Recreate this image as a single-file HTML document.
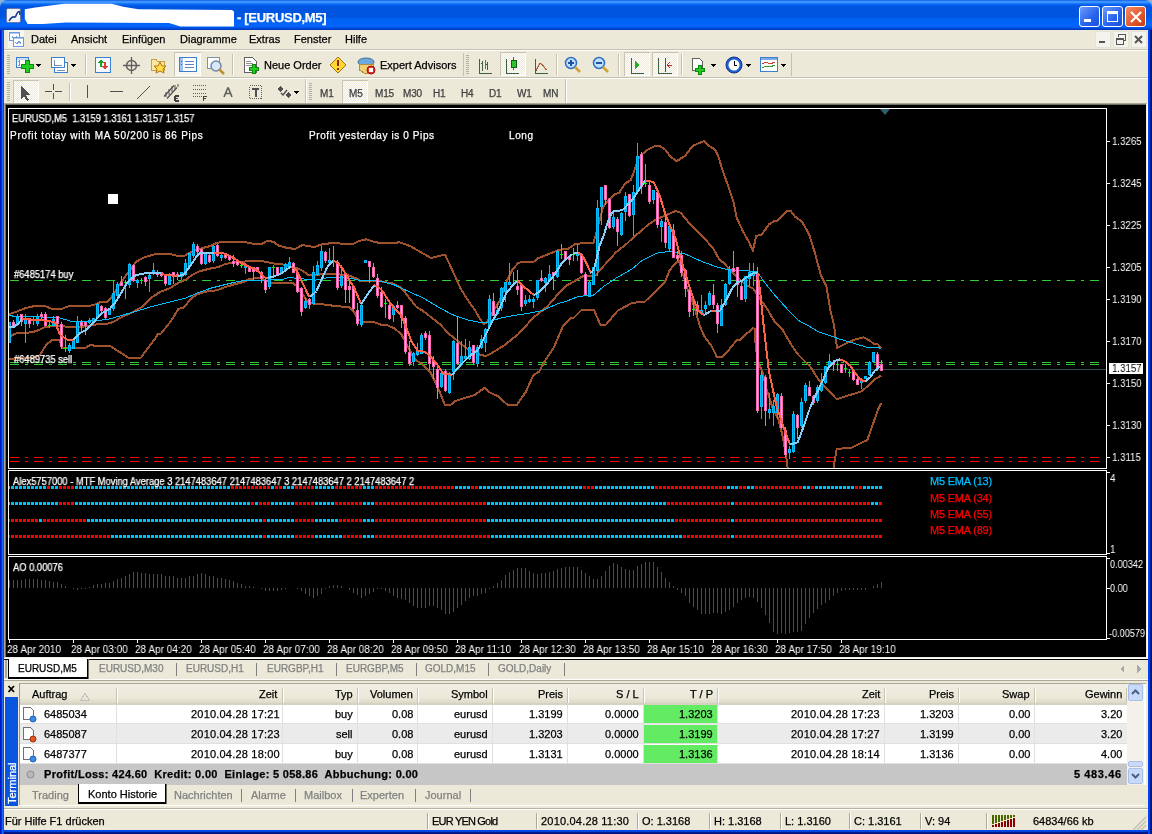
<!DOCTYPE html>
<html><head><meta charset="utf-8">
<style>
*{margin:0;padding:0;box-sizing:border-box}
html,body{width:1152px;height:834px;overflow:hidden;background:#8FB0D0;-webkit-font-smoothing:antialiased;font-family:"Liberation Sans",sans-serif;font-size:11px;color:#000;position:relative}
.a{position:absolute}
.t,.pl,.tl{will-change:transform;-webkit-text-stroke:0.25px currentColor}
.pl,.tl{-webkit-text-stroke:0}
.t{position:absolute;white-space:nowrap;line-height:1}
#title{left:0;top:0;width:1152px;height:30px;background:linear-gradient(#0046D5 0px,#3A93FF 1px,#3A93FF 2.5px,#0A6CF8 4px,#0056E2 6px,#0055DE 17px,#0061F2 19px,#0066FF 26px,#004FE0 28px,#0036B8 30px);border-radius:7px 7px 0 0}
.tbtn{width:21px;height:21px;border:1px solid #fff;border-radius:3px}
.menu .t{top:34px;font-size:11px}
.w{color:#fff}
.pl{position:absolute;left:1112px;color:#fff;font-size:11px;line-height:1;white-space:nowrap;transform:scaleX(0.88);transform-origin:0 0}
.ct{font-size:10px;transform:scaleX(0.935);transform-origin:0 0}
.tl{position:absolute;top:644px;color:#fff;font-size:11px;line-height:1;white-space:nowrap;transform:scaleX(0.91);transform-origin:0 0}
</style></head><body>
<div class="a" style="left:0;top:20px;width:1152px;height:814px;background:#ECE9D8"></div>
<!-- title bar -->
<div id="title" class="a"></div>
<div class="a" style="left:6px;top:8px;width:15px;height:15px;background:#F4F4F4;border:1px solid #6A7AA8;border-radius:2px"></div>
<svg class="a" style="left:0;top:0" width="240" height="30"><path d="M24.8 9.2L35.3 7.6 48.6 5.7 64 3.8H111.7L123.1 6.7 138.4 9.2 232 9.9 234 11.5V26.4H180.4L169 22.9 65.8 22.5 43 23.9H27.6L24.8 19Z" fill="#fff"/></svg>
<div class="t" style="left:237px;top:11px;font-size:13px;letter-spacing:-0.3px;font-weight:bold;color:#fff">- [EURUSD,M5]</div>
<div class="a tbtn" style="left:1079px;top:6px;background:linear-gradient(135deg,#6E9BFA,#2562EC 60%,#1D50D8)"></div>
<div class="a" style="left:1084px;top:19px;width:7px;height:3px;background:#fff"></div>
<div class="a tbtn" style="left:1102px;top:6px;background:linear-gradient(135deg,#6E9BFA,#2562EC 60%,#1D50D8)"></div>
<div class="a" style="left:1107px;top:11px;width:11px;height:11px;border:1px solid #fff;border-top-width:3px"></div>
<div class="a tbtn" style="left:1125px;top:6px;background:linear-gradient(135deg,#F58A6A,#E2562B 60%,#C33C10)"></div>

<svg class="a" style="left:1125px;top:6px" width="22" height="22"><path d="M6 6l10 10M16 6L6 16" stroke="#fff" stroke-width="2.2"/></svg>
<svg class="a" style="left:6px;top:8px" width="16" height="16"><path d="M3 13c2-3 3-5 5-4s2-3 4-5 2 2 2 3" stroke="#1A3A90" stroke-width="1.6" fill="none"/></svg>
<!-- MDI buttons -->
<div class="a" style="left:1095px;top:31px;width:16px;height:17px;background:#F4F3EE;border:1px solid #E6E3D6"></div>
<div class="a" style="left:1113px;top:31px;width:16px;height:17px;background:#F4F3EE;border:1px solid #E6E3D6"></div>
<div class="a" style="left:1131px;top:31px;width:16px;height:17px;background:#F4F3EE;border:1px solid #E6E3D6"></div>
<svg class="a" style="left:1095px;top:31px" width="54" height="18" shape-rendering="crispEdges">
<rect x="4" y="10" width="6" height="2" fill="#555"/>
<rect x="21.5" y="7.5" width="7" height="6" fill="none" stroke="#555"/><rect x="21" y="7" width="8" height="2" fill="#555"/>
<path d="M23.5 5.5V3.5h7v6h-2" fill="none" stroke="#555"/>
<path d="M40 5l7 7M47 5l-7 7" stroke="#555" stroke-width="2" shape-rendering="auto"/>
</svg>
<div class="a" style="left:0;top:30px;width:4px;height:804px;background:linear-gradient(90deg,#0019C6 25%,#0630D0 25% 50%,#1E6AF0 50% 75%,#0052E3 75%)"></div>
<div class="a" style="left:1148px;top:30px;width:4px;height:804px;background:linear-gradient(90deg,#0046F0 25%,#0044D8 25% 50%,#001C90 50% 75%,#00117E 75%)"></div>
<div class="a" style="left:4px;top:830px;width:1144px;height:4px;background:linear-gradient(#0046F0 25%,#0044D8 25% 50%,#001C90 50% 75%,#00117E 75%)"></div>

<!-- menu -->
<div class="a" style="left:4px;top:49px;width:1144px;height:1px;background:#C5C2B2"></div>
<div class="a" style="left:4px;top:50px;width:1144px;height:1px;background:#fff"></div>
<div class="menu">
<div class="t" style="left:31px">Datei</div>
<div class="t" style="left:71px">Ansicht</div>
<div class="t" style="left:122px">Einfügen</div>
<div class="t" style="left:180px">Diagramme</div>
<div class="t" style="left:249px">Extras</div>
<div class="t" style="left:294px">Fenster</div>
<div class="t" style="left:345px">Hilfe</div>
</div>

<!-- toolbars -->
<div class="a" style="left:4px;top:77px;width:1144px;height:1px;background:#C5C2B2"></div>
<div class="a" style="left:4px;top:78px;width:1144px;height:1px;background:#fff"></div>


<!-- menu icon -->
<div class="a" style="left:8px;top:30px;width:16px;height:18px;background:#F6F5F0"></div>
<svg class="a" style="left:8px;top:31px" width="16" height="16" shape-rendering="crispEdges">
<rect x="1.5" y="1.5" width="10" height="8" fill="#fff" stroke="#6A9BE8"/>
<rect x="2" y="2" width="9" height="1" fill="#A8C8F0"/>
<path d="M4 6h5M4 6l1-1M4 6l1 1M9 6l-1-1M9 6l-1 1" stroke="#6A9BE8" fill="none"/>
<rect x="5.5" y="6.5" width="10" height="9" fill="#fff" stroke="#6A9BE8"/>
<rect x="6" y="7" width="9" height="1" fill="#A8C8F0"/>
<path d="M7 11l2 2 2-3 2 3" stroke="#6A9BE8" fill="none"/>
</svg>
<!-- toolbar row1 -->
<div class="a" style="left:7px;top:55px;width:3px;height:19px;background:repeating-linear-gradient(#B5B19F 0 1px,transparent 1px 2px)"></div>
<svg class="a" style="left:0;top:51px" width="800" height="27" shape-rendering="crispEdges">
 <!-- new chart -->
 <rect x="16.5" y="6.5" width="12" height="10" fill="#fff" stroke="#3C7FD0"/>
 <rect x="17" y="7" width="11" height="2" fill="#C8DCF4"/>
 <path d="M19 9v6M18 10h2M18 14h2" stroke="#7890B0" fill="none"/>
 <path d="M25 9h4v4h4v4h-4v4h-4v-4h-4v-4h4z" fill="#22CC22" stroke="#0A8A0A"/>
 <path d="M36 13h5l-2.5 3z" fill="#000"/>
 <!-- profiles -->
 <rect x="54.5" y="11.5" width="13" height="10" fill="#fff" stroke="#3C7FD0"/>
 <rect x="51.5" y="6.5" width="13" height="10" fill="#fff" stroke="#3C7FD0"/>
 <path d="M54 9v5h8M57 19h8" stroke="#7890B0" fill="none"/>
 <path d="M71 13h5l-2.5 3z" fill="#000"/>
 <rect x="85" y="3" width="1" height="21" fill="#C5C2B2"/><rect x="86" y="3" width="1" height="21" fill="#fff"/>
 <!-- market watch -->
 <rect x="95.5" y="6.5" width="15" height="15" fill="#F4F8FF" stroke="#3C7FD0"/>
 <path d="M101 8l-3 4h2v4h2v-4h2z" fill="#20A020"/>
 <path d="M105 19l3-4h-2v-4h-2v4h-2z" fill="#E04030"/>
 <!-- crosshair -->
 <circle cx="131.5" cy="14.5" r="5" fill="none" stroke="#606060" stroke-width="1.5" shape-rendering="auto"/>
 <path d="M131.5 6v17M123 14.5h17" stroke="#606060" stroke-width="1.3" shape-rendering="auto"/>
 <!-- folder star -->
 <path d="M151 8h5l1 2h7v9h-13z" fill="#F8E8A0" stroke="#C8A040"/>
 <path d="M160 11l2 4h4l-3 3 1 4-4-2-4 2 1-4-3-3h4z" fill="#FFE040" stroke="#B07020" shape-rendering="auto"/>
 <!-- pressed data window -->
 <rect x="174.5" y="1.5" width="26" height="23" fill="#F7F6F1" stroke="#ffffff"/>
 <path d="M174.5 24.5V1.5h26" stroke="#C9C5B5" fill="none"/>
 <rect x="179.5" y="6.5" width="17" height="14" fill="#fff" stroke="#3C7FD0"/>
 <rect x="180" y="7" width="3" height="13" fill="#9CC0F0"/>
 <path d="M185 10h9M185 13h9M185 16h9" stroke="#6080C0"/>
 <path d="M181 10h1M181 13h1" stroke="#E03030"/>
 <!-- tester -->
 <rect x="207.5" y="6.5" width="12" height="11" fill="#fff" stroke="#8090A0"/>
 <circle cx="216" cy="15" r="5" fill="#D8E8F8" stroke="#7088A8" stroke-width="1.5" shape-rendering="auto"/>
 <path d="M219 18l5 5" stroke="#C09030" stroke-width="2.5" shape-rendering="auto"/>
 <rect x="232" y="3" width="1" height="21" fill="#C5C2B2"/><rect x="233" y="3" width="1" height="21" fill="#fff"/>
 <!-- new order -->
 <path d="M244.5 6.5h8l4 4v11h-12z" fill="#fff" stroke="#606060"/>
 <path d="M246 10h5M246 12h7M246 14h7" stroke="#909090"/>
 <path d="M252 13h3v3h3v3h-3v3h-3v-3h-3v-3h3z" fill="#22CC22" stroke="#0A8A0A"/>
 <!-- warning -->
 <path d="M338 6l8 8-8 8-8-8z" fill="#FFD830" stroke="#A07010"/>
 <rect x="337" y="9" width="2" height="6" fill="#A02010"/><rect x="337" y="17" width="2" height="2" fill="#A02010"/>
 <!-- experts -->
 <ellipse cx="366" cy="11" rx="8" ry="4" fill="#6FA8DC" stroke="#40709C" shape-rendering="auto"/>
 <path d="M359 13h14v6l-7 4-7-4z" fill="#F0D070" stroke="#B09040"/>
 <circle cx="371" cy="19" r="4" fill="#E03020" stroke="#A01010" shape-rendering="auto"/>
 <rect x="369" y="17" width="4" height="4" fill="#fff"/>
 <!-- toolbar end 1 -->
 <rect x="463" y="2" width="1" height="23" fill="#C5C2B2"/>
 <rect x="466" y="4" width="3" height="20" fill="url(#grip)"/>
 <!-- bar chart -->
 <path d="M479 8v14h13M482 20V10M481 12h1M482 18h1M487 19V11M486 13h1M487 16h1" stroke="#406040" fill="none"/>
 <path d="M485 9v9" stroke="#20A020"/>
 <!-- candle pressed -->
 <rect x="500.5" y="1.5" width="25" height="23" fill="url(#dither)" stroke="#fff"/>
 <path d="M500.5 24.5V1.5h25" stroke="#C9C5B5" fill="none"/>
 <path d="M506 8v14h13" stroke="#406040" fill="none"/>
 <path d="M513 6v13" stroke="#208020"/><rect x="511" y="9" width="5" height="7" fill="#30C030" stroke="#106010"/>
 <!-- line chart -->
 <path d="M535 8v14h13M536 20l4-8 3 3 4 4" stroke="#406040" fill="none"/>
 <path d="M536 19l4-7 3 2 3 5" stroke="#D05030" fill="none" shape-rendering="auto"/>
 <rect x="556" y="3" width="1" height="21" fill="#C5C2B2"/><rect x="557" y="3" width="1" height="21" fill="#fff"/>
 <!-- zoom in/out -->
 <circle cx="571" cy="12" r="5.5" fill="#BFE0FF" stroke="#3070C0" stroke-width="1.5" shape-rendering="auto"/>
 <path d="M568 12h6M571 9v6" stroke="#2050A0" stroke-width="1.5"/>
 <path d="M575 16l5 5" stroke="#D0A030" stroke-width="2.5" shape-rendering="auto"/>
 <circle cx="599" cy="12" r="5.5" fill="#BFE0FF" stroke="#3070C0" stroke-width="1.5" shape-rendering="auto"/>
 <path d="M596 12h6" stroke="#2050A0" stroke-width="1.5"/>
 <path d="M603 16l5 5" stroke="#D0A030" stroke-width="2.5" shape-rendering="auto"/>
 <rect x="618" y="3" width="1" height="21" fill="#C5C2B2"/><rect x="619" y="3" width="1" height="21" fill="#fff"/>
 <!-- autoscroll pressed -->
 <rect x="624.5" y="1.5" width="25" height="23" fill="url(#dither)" stroke="#fff"/>
 <path d="M624.5 24.5V1.5h25" stroke="#C9C5B5" fill="none"/>
 <path d="M631 7v15h13" stroke="#406040" fill="none"/>
 <path d="M635 10l5 4-5 4z" fill="#20B020"/>
 <rect x="652.5" y="1.5" width="25" height="23" fill="url(#dither)" stroke="#fff"/>
 <path d="M652.5 24.5V1.5h25" stroke="#C9C5B5" fill="none"/>
 <path d="M658 7v15h14M665 7v14" stroke="#406040" fill="none"/>
 <path d="M667 14h5M667 14l3-3M667 14l3 3" stroke="#C03020" fill="none"/>
 <rect x="681" y="3" width="1" height="21" fill="#C5C2B2"/><rect x="682" y="3" width="1" height="21" fill="#fff"/>
 <!-- templates -->
 <path d="M692.5 7.5h7l3 3v9h-10z" fill="#fff" stroke="#606060"/>
 <path d="M698 14h3v3h3v3h-3v3h-3v-3h-3v-3h3z" fill="#22CC22" stroke="#0A8A0A"/>
 <path d="M711 13h5l-2.5 3z" fill="#000"/>
 <!-- clock -->
 <circle cx="734" cy="14" r="8" fill="#2060D0" stroke="#103090" shape-rendering="auto"/>
 <circle cx="734" cy="14" r="5.5" fill="#fff" shape-rendering="auto"/>
 <path d="M734 10v4h3" stroke="#000" fill="none"/>
 <path d="M746 13h5l-2.5 3z" fill="#000"/>
 <!-- indicators -->
 <rect x="760.5" y="6.5" width="17" height="14" fill="#fff" stroke="#3C7FD0"/>
 <rect x="761" y="7" width="16" height="2" fill="#7AA8E8"/>
 <path d="M762 13l4-2 4 2 5-2" stroke="#D04030" fill="none"/>
 <path d="M762 17l4-2 4 1 5-2" stroke="#30A030" fill="none"/>
 <path d="M781 13h5l-2.5 3z" fill="#000"/>
 <rect x="791" y="2" width="1" height="23" fill="#C5C2B2"/>
 <defs><pattern id="dither" width="2" height="2" patternUnits="userSpaceOnUse"><rect width="2" height="2" fill="#FFFFFF"/><rect width="1" height="1" fill="#ECE9D8"/><rect x="1" y="1" width="1" height="1" fill="#ECE9D8"/></pattern><pattern id="grip" width="3" height="2" patternUnits="userSpaceOnUse"><rect width="3" height="1" fill="#B5B19F"/></pattern></defs>
</svg>
<div class="t" style="left:264px;top:60px">Neue Order</div>
<div class="t" style="left:380px;top:60px">Expert Advisors</div>

<!-- toolbar row2 -->
<div class="a" style="left:7px;top:82px;width:3px;height:19px;background:repeating-linear-gradient(#B5B19F 0 1px,transparent 1px 2px)"></div>
<svg class="a" style="left:0;top:79px" width="600" height="25" shape-rendering="crispEdges">
 <rect x="13.5" y="1.5" width="25" height="22" fill="url(#dither)" stroke="#fff"/>
 <path d="M13.5 23.5V1.5h25" stroke="#C9C5B5" fill="none"/>
 <path d="M21 6v14l3-3 3 5 2-1-3-5h4z" fill="#505050"/>
 <path d="M53.5 5v15M45 12.5h17" stroke="#505050"/>
 <rect x="52" y="11" width="3" height="3" fill="#ECE9D8"/>
 <rect x="69" y="4" width="1" height="18" fill="#C5C2B2"/><rect x="70" y="4" width="1" height="18" fill="#fff"/>
 <rect x="87" y="6" width="1" height="13" fill="#505050"/>
 <rect x="110" y="12" width="13" height="1" fill="#505050"/>
 <path d="M137 20l13-13" stroke="#505050" shape-rendering="auto"/>
  <g shape-rendering="auto" stroke="#505050" fill="none">
 <path d="M164 17.5l10-11M167 19.5l10-11" stroke-width="1.2"/>
 <path d="M166 13v5M169 10v6M172 7v6M175 6v5M178 5v3" stroke-width="1"/>
 </g>
 <path d="M175 17h4M175 17v5M175 19.5h3M175 22h4" stroke="#404040" stroke-width="1.3" fill="none"/>
 <path d="M193 6.5h13M193 10.5h13M193 14h13M193 17.5h10" stroke="#606060" stroke-dasharray="1 1" fill="none"/>
 <path d="M203.5 17v5M203 17.5h4M203 19.5h3" stroke="#404040" stroke-width="1.3" fill="none"/>
 <path d="M224 18l3.8-9h0.6L232 18M225.5 14.5h5" stroke="#606060" stroke-width="1.6" fill="none" shape-rendering="auto"/>
 <rect x="249.5" y="6.5" width="12" height="13" fill="none" stroke="#606060" stroke-dasharray="1 1"/>
 <path d="M252 9.5h7M255.5 9.5v8" stroke="#505050" stroke-width="2" fill="none"/>
 <path d="M280 7l3 3-3 3-3-3z" fill="#505050"/><path d="M288 13l3 3-3 3-3-3z" fill="#505050"/>
 <path d="M281 14l2 2 4-5" stroke="#505050" stroke-width="1.5" fill="none" shape-rendering="auto"/>
 <path d="M294 12h5l-2.5 3z" fill="#000"/>
<rect x="305" y="0" width="1" height="25" fill="#C5C2B2"/><rect x="306" y="0" width="1" height="25" fill="#fff"/>
 <rect x="309" y="4" width="3" height="18" fill="url(#grip2)"/>
 <rect x="342.5" y="1.5" width="25" height="22" fill="url(#dither)" stroke="#fff"/>
 <path d="M342.5 23.5V1.5h25" stroke="#C9C5B5" fill="none"/>
 <rect x="565" y="0" width="1" height="25" fill="#C5C2B2"/><rect x="566" y="0" width="1" height="25" fill="#fff"/>
 <defs><pattern id="dither2" width="2" height="2" patternUnits="userSpaceOnUse"><rect width="2" height="2" fill="#FFFFFF"/><rect width="1" height="1" fill="#ECE9D8"/><rect x="1" y="1" width="1" height="1" fill="#ECE9D8"/></pattern><pattern id="grip2" width="3" height="2" patternUnits="userSpaceOnUse"><rect width="3" height="1" fill="#B5B19F"/></pattern></defs>
</svg>
<div class="t" style="left:320px;top:89px;color:#404040;font-size:10px;letter-spacing:-0.2px">M1</div>
<div class="t" style="left:349px;top:89px;color:#404040;font-size:10px;letter-spacing:-0.2px">M5</div>
<div class="t" style="left:375px;top:89px;color:#404040;font-size:10px;letter-spacing:-0.2px">M15</div>
<div class="t" style="left:403px;top:89px;color:#404040;font-size:10px;letter-spacing:-0.2px">M30</div>
<div class="t" style="left:433px;top:89px;color:#404040;font-size:10px;letter-spacing:-0.2px">H1</div>
<div class="t" style="left:461px;top:89px;color:#404040;font-size:10px;letter-spacing:-0.2px">H4</div>
<div class="t" style="left:489px;top:89px;color:#404040;font-size:10px;letter-spacing:-0.2px">D1</div>
<div class="t" style="left:517px;top:89px;color:#404040;font-size:10px;letter-spacing:-0.2px">W1</div>
<div class="t" style="left:543px;top:89px;color:#404040;font-size:10px;letter-spacing:-0.2px">MN</div>

<!-- chart window -->
<div class="a" style="left:4px;top:103px;width:1144px;height:1px;background:#ACA899"></div>
<div class="a" style="left:4px;top:104px;width:1143px;height:1px;background:#716F64"></div>
<div class="a" style="left:4px;top:103px;width:1px;height:556px;background:#ACA899"></div>
<div class="a" style="left:5px;top:104px;width:1px;height:554px;background:#716F64"></div>
<div class="a" style="left:6px;top:105px;width:1140px;height:552px;background:#000"></div>
<div class="a" style="left:1146px;top:104px;width:1px;height:554px;background:#F1EFE2"></div>
<div class="a" style="left:1147px;top:103px;width:1px;height:556px;background:#fff"></div>
<div class="a" style="left:5px;top:657px;width:1142px;height:1px;background:#F1EFE2"></div>
<div class="a" style="left:4px;top:658px;width:1144px;height:1px;background:#fff"></div>
<!-- frames -->
<div class="a" style="left:8px;top:108px;width:1099px;height:361px;border:1px solid #fff"></div>
<div class="a" style="left:8px;top:470px;width:1099px;height:85px;border:1px solid #fff"></div>
<div class="a" style="left:8px;top:556px;width:1099px;height:84px;border:1px solid #fff"></div>
<svg class="a" style="left:0;top:0" width="1152" height="834" shape-rendering="crispEdges"><defs><clipPath id="cm"><rect x="9" y="109" width="1097" height="359"/></clipPath><clipPath id="ci"><rect x="9" y="471" width="1097" height="83"/></clipPath><clipPath id="ca"><rect x="9" y="557" width="1097" height="82"/></clipPath></defs><g clip-path="url(#cm)"><rect x="9" y="369" width="1097" height="1" fill="#2F4F4F"/><path d="M10 280.5H19M25 280.5H28M34 280.5H43M49 280.5H52M58 280.5H67M73 280.5H76M82 280.5H91M97 280.5H100M106 280.5H115M121 280.5H124M130 280.5H139M145 280.5H148M154 280.5H163M169 280.5H172M178 280.5H187M193 280.5H196M202 280.5H211M217 280.5H220M226 280.5H235M241 280.5H244M250 280.5H259M265 280.5H268M274 280.5H283M289 280.5H292M298 280.5H307M313 280.5H316M322 280.5H331M337 280.5H340M346 280.5H355M361 280.5H364M370 280.5H379M385 280.5H388M394 280.5H403M409 280.5H412M418 280.5H427M433 280.5H436M442 280.5H451M457 280.5H460M466 280.5H475M481 280.5H484M490 280.5H499M505 280.5H508M514 280.5H523M529 280.5H532M538 280.5H547M553 280.5H556M562 280.5H571M577 280.5H580M586 280.5H595M601 280.5H604M610 280.5H619M625 280.5H628M634 280.5H643M649 280.5H652M658 280.5H667M673 280.5H676M682 280.5H691M697 280.5H700M706 280.5H715M721 280.5H724M730 280.5H739M745 280.5H748M754 280.5H763M769 280.5H772M778 280.5H787M793 280.5H796M802 280.5H811M817 280.5H820M826 280.5H835M841 280.5H844M850 280.5H859M865 280.5H868M874 280.5H883M889 280.5H892M898 280.5H907M913 280.5H916M922 280.5H931M937 280.5H940M946 280.5H955M961 280.5H964M970 280.5H979M985 280.5H988M994 280.5H1003M1009 280.5H1012M1018 280.5H1027M1033 280.5H1036M1042 280.5H1051M1057 280.5H1060M1066 280.5H1075M1081 280.5H1084M1090 280.5H1099" stroke="#32CD32" stroke-width="1" fill="none"/><path d="M10 362.5H19M25 362.5H28M34 362.5H43M49 362.5H52M58 362.5H67M73 362.5H76M82 362.5H91M97 362.5H100M106 362.5H115M121 362.5H124M130 362.5H139M145 362.5H148M154 362.5H163M169 362.5H172M178 362.5H187M193 362.5H196M202 362.5H211M217 362.5H220M226 362.5H235M241 362.5H244M250 362.5H259M265 362.5H268M274 362.5H283M289 362.5H292M298 362.5H307M313 362.5H316M322 362.5H331M337 362.5H340M346 362.5H355M361 362.5H364M370 362.5H379M385 362.5H388M394 362.5H403M409 362.5H412M418 362.5H427M433 362.5H436M442 362.5H451M457 362.5H460M466 362.5H475M481 362.5H484M490 362.5H499M505 362.5H508M514 362.5H523M529 362.5H532M538 362.5H547M553 362.5H556M562 362.5H571M577 362.5H580M586 362.5H595M601 362.5H604M610 362.5H619M625 362.5H628M634 362.5H643M649 362.5H652M658 362.5H667M673 362.5H676M682 362.5H691M697 362.5H700M706 362.5H715M721 362.5H724M730 362.5H739M745 362.5H748M754 362.5H763M769 362.5H772M778 362.5H787M793 362.5H796M802 362.5H811M817 362.5H820M826 362.5H835M841 362.5H844M850 362.5H859M865 362.5H868M874 362.5H883M889 362.5H892M898 362.5H907M913 362.5H916M922 362.5H931M937 362.5H940M946 362.5H955M961 362.5H964M970 362.5H979M985 362.5H988M994 362.5H1003M1009 362.5H1012M1018 362.5H1027M1033 362.5H1036M1042 362.5H1051M1057 362.5H1060M1066 362.5H1075M1081 362.5H1084M1090 362.5H1099" stroke="#32CD32" stroke-width="1" fill="none"/><path d="M10 364.5H19M25 364.5H28M34 364.5H43M49 364.5H52M58 364.5H67M73 364.5H76M82 364.5H91M97 364.5H100M106 364.5H115M121 364.5H124M130 364.5H139M145 364.5H148M154 364.5H163M169 364.5H172M178 364.5H187M193 364.5H196M202 364.5H211M217 364.5H220M226 364.5H235M241 364.5H244M250 364.5H259M265 364.5H268M274 364.5H283M289 364.5H292M298 364.5H307M313 364.5H316M322 364.5H331M337 364.5H340M346 364.5H355M361 364.5H364M370 364.5H379M385 364.5H388M394 364.5H403M409 364.5H412M418 364.5H427M433 364.5H436M442 364.5H451M457 364.5H460M466 364.5H475M481 364.5H484M490 364.5H499M505 364.5H508M514 364.5H523M529 364.5H532M538 364.5H547M553 364.5H556M562 364.5H571M577 364.5H580M586 364.5H595M601 364.5H604M610 364.5H619M625 364.5H628M634 364.5H643M649 364.5H652M658 364.5H667M673 364.5H676M682 364.5H691M697 364.5H700M706 364.5H715M721 364.5H724M730 364.5H739M745 364.5H748M754 364.5H763M769 364.5H772M778 364.5H787M793 364.5H796M802 364.5H811M817 364.5H820M826 364.5H835M841 364.5H844M850 364.5H859M865 364.5H868M874 364.5H883M889 364.5H892M898 364.5H907M913 364.5H916M922 364.5H931M937 364.5H940M946 364.5H955M961 364.5H964M970 364.5H979M985 364.5H988M994 364.5H1003M1009 364.5H1012M1018 364.5H1027M1033 364.5H1036M1042 364.5H1051M1057 364.5H1060M1066 364.5H1075M1081 364.5H1084M1090 364.5H1099" stroke="#32CD32" stroke-width="1" fill="none"/><path d="M10 457.5H19M25 457.5H28M34 457.5H43M49 457.5H52M58 457.5H67M73 457.5H76M82 457.5H91M97 457.5H100M106 457.5H115M121 457.5H124M130 457.5H139M145 457.5H148M154 457.5H163M169 457.5H172M178 457.5H187M193 457.5H196M202 457.5H211M217 457.5H220M226 457.5H235M241 457.5H244M250 457.5H259M265 457.5H268M274 457.5H283M289 457.5H292M298 457.5H307M313 457.5H316M322 457.5H331M337 457.5H340M346 457.5H355M361 457.5H364M370 457.5H379M385 457.5H388M394 457.5H403M409 457.5H412M418 457.5H427M433 457.5H436M442 457.5H451M457 457.5H460M466 457.5H475M481 457.5H484M490 457.5H499M505 457.5H508M514 457.5H523M529 457.5H532M538 457.5H547M553 457.5H556M562 457.5H571M577 457.5H580M586 457.5H595M601 457.5H604M610 457.5H619M625 457.5H628M634 457.5H643M649 457.5H652M658 457.5H667M673 457.5H676M682 457.5H691M697 457.5H700M706 457.5H715M721 457.5H724M730 457.5H739M745 457.5H748M754 457.5H763M769 457.5H772M778 457.5H787M793 457.5H796M802 457.5H811M817 457.5H820M826 457.5H835M841 457.5H844M850 457.5H859M865 457.5H868M874 457.5H883M889 457.5H892M898 457.5H907M913 457.5H916M922 457.5H931M937 457.5H940M946 457.5H955M961 457.5H964M970 457.5H979M985 457.5H988M994 457.5H1003M1009 457.5H1012M1018 457.5H1027M1033 457.5H1036M1042 457.5H1051M1057 457.5H1060M1066 457.5H1075M1081 457.5H1084M1090 457.5H1099" stroke="#FF0000" stroke-width="1" fill="none"/><path d="M10 461.5H19M25 461.5H28M34 461.5H43M49 461.5H52M58 461.5H67M73 461.5H76M82 461.5H91M97 461.5H100M106 461.5H115M121 461.5H124M130 461.5H139M145 461.5H148M154 461.5H163M169 461.5H172M178 461.5H187M193 461.5H196M202 461.5H211M217 461.5H220M226 461.5H235M241 461.5H244M250 461.5H259M265 461.5H268M274 461.5H283M289 461.5H292M298 461.5H307M313 461.5H316M322 461.5H331M337 461.5H340M346 461.5H355M361 461.5H364M370 461.5H379M385 461.5H388M394 461.5H403M409 461.5H412M418 461.5H427M433 461.5H436M442 461.5H451M457 461.5H460M466 461.5H475M481 461.5H484M490 461.5H499M505 461.5H508M514 461.5H523M529 461.5H532M538 461.5H547M553 461.5H556M562 461.5H571M577 461.5H580M586 461.5H595M601 461.5H604M610 461.5H619M625 461.5H628M634 461.5H643M649 461.5H652M658 461.5H667M673 461.5H676M682 461.5H691M697 461.5H700M706 461.5H715M721 461.5H724M730 461.5H739M745 461.5H748M754 461.5H763M769 461.5H772M778 461.5H787M793 461.5H796M802 461.5H811M817 461.5H820M826 461.5H835M841 461.5H844M850 461.5H859M865 461.5H868M874 461.5H883M889 461.5H892M898 461.5H907M913 461.5H916M922 461.5H931M937 461.5H940M946 461.5H955M961 461.5H964M970 461.5H979M985 461.5H988M994 461.5H1003M1009 461.5H1012M1018 461.5H1027M1033 461.5H1036M1042 461.5H1051M1057 461.5H1060M1066 461.5H1075M1081 461.5H1084M1090 461.5H1099" stroke="#FF0000" stroke-width="1" fill="none"/><polyline points="8.0,314.5 13.0,313.0 18.0,311.0 26.0,308.0 37.0,305.5 45.0,306.0 52.0,309.0 62.0,309.0 66.0,307.0 70.0,306.0 88.0,306.0 94.0,305.0 100.5,302.0 107.0,302.0 111.0,298.0 119.0,285.4 125.6,276.0 129.5,271.0 136.0,261.7 145.0,257.0 154.6,254.4 160.0,253.7 169.0,253.7 177.0,255.7 184.0,256.0 192.0,251.4 202.5,248.0 210.4,246.0 217.0,242.8 222.3,242.0 244.7,242.0 254.0,244.0 261.8,244.0 267.8,240.6 273.7,242.0 279.0,246.0 284.0,246.8 286.0,247.8 295.2,249.0 301.8,245.2 308.4,245.8 313.7,247.2 321.6,244.5 334.8,242.6 342.7,244.0 353.2,244.0 358.5,241.2 366.4,239.3 374.3,242.0 382.0,243.2 400.0,242.4 410.0,246.0 431.0,258.0 445.0,254.5 455.0,276.0 460.6,288.6 467.8,300.0 475.0,310.2 480.0,318.8 483.8,324.0 486.6,322.6 492.4,312.6 499.6,301.0 506.8,281.0 512.5,269.4 518.3,263.0 524.0,261.5 534.1,261.5 538.4,258.0 550.0,253.6 558.6,250.0 568.6,248.5 576.0,243.6 593.3,243.2 596.1,233.8 599.0,222.3 603.3,206.5 609.1,199.3 614.9,194.3 619.2,192.8 625.0,183.5 630.7,180.0 635.0,169.0 637.9,159.0 642.3,154.2 647.8,149.5 654.0,146.4 660.3,146.4 665.0,149.5 671.2,157.3 676.6,161.2 685.2,155.7 693.0,145.6 703.9,141.2 708.6,145.6 714.8,149.5 717.9,155.0 722.6,170.5 728.8,187.7 733.5,201.7 736.6,217.3 742.9,231.3 749.1,242.2 753.0,250.8 756.1,236.0 761.8,234.5 768.9,224.4 774.7,220.8 777.6,220.8 786.2,211.5 790.5,210.8 794.8,216.5 802.0,221.6 809.2,234.5 815.0,253.2 820.7,274.8 826.4,286.3 830.3,310.0 834.1,325.4 836.0,340.7 837.0,348.0 841.2,346.0 847.6,342.7 855.2,339.4 863.8,337.3 870.3,341.0 873.6,343.8 877.9,344.3 881.1,348.6" fill="none" stroke="#A0522D" stroke-width="2" stroke-linejoin="round"/><polyline points="8.0,337.0 17.0,333.0 25.0,333.0 33.0,332.0 39.0,330.0 45.0,327.0 52.0,326.0 64.6,326.5 80.0,327.0 93.0,325.2 98.2,323.9 108.6,323.5 114.7,321.3 120.3,317.7 132.0,312.5 142.7,306.5 152.0,297.3 160.0,292.0 170.4,288.0 178.3,282.8 186.0,279.5 192.0,275.0 199.8,271.2 210.4,268.5 218.3,267.2 223.6,264.6 231.5,262.6 242.0,262.0 251.3,260.6 263.0,261.3 276.3,264.0 284.0,264.6 295.2,267.6 301.8,270.3 308.4,275.0 316.3,275.0 325.5,273.6 334.8,274.2 348.0,275.0 357.2,278.8 361.2,281.5 371.7,280.8 382.0,281.5 393.0,283.6 401.6,288.0 408.8,297.3 416.0,306.6 423.2,311.0 430.4,316.7 440.4,324.6 449.0,334.0 456.3,339.7 466.3,348.3 474.3,350.2 480.0,354.8 486.0,356.0 489.0,354.6 503.8,345.7 518.5,334.0 533.3,317.7 547.0,306.8 557.0,295.3 567.2,285.2 574.4,281.3 582.8,276.3 591.2,276.3 595.4,275.4 599.6,270.4 608.0,261.2 616.3,252.0 626.0,244.4 634.8,236.0 640.0,232.0 647.8,225.0 655.6,219.6 666.5,215.0 675.8,211.0 680.5,212.6 688.3,222.0 702.3,236.0 713.2,248.4 719.5,260.0 724.4,263.3 731.6,272.0 738.7,279.0 746.0,285.0 753.1,288.5 760.3,299.3 767.5,309.4 774.6,321.5 782.3,329.2 790.0,342.6 797.7,354.1 805.3,361.8 811.1,367.6 816.9,377.2 824.5,386.8 832.2,394.5 836.8,399.4 844.4,396.7 855.2,393.4 861.7,391.3 869.2,384.8 874.6,379.4 881.1,375.6" fill="none" stroke="#A0522D" stroke-width="2" stroke-linejoin="round"/><polyline points="8.0,358.7 33.0,358.0 40.0,355.0 46.0,345.0 52.0,340.0 59.0,340.0 63.0,348.0 85.2,347.8 91.3,344.7 93.9,345.6 109.5,345.6 128.6,357.8 140.8,357.8 154.7,339.1 158.1,333.9 160.7,333.9 171.1,320.9 178.3,309.0 184.0,307.5 190.6,299.0 197.2,294.3 206.4,291.6 217.0,290.3 223.6,287.7 234.0,284.4 244.7,281.7 248.6,279.0 260.5,277.8 265.8,280.4 271.0,283.0 292.6,282.8 296.5,286.0 308.4,302.6 316.3,304.0 325.5,304.6 334.8,306.0 349.3,307.2 354.6,312.5 357.2,317.8 361.2,321.7 373.0,321.7 382.0,325.0 387.2,325.3 394.4,328.2 401.6,334.7 408.8,348.3 414.5,359.0 423.2,365.0 430.4,372.0 436.0,383.6 440.4,393.7 444.8,404.8 450.7,404.8 455.1,401.1 464.0,398.1 474.3,395.2 484.6,387.8 490.5,393.0 497.9,396.0 508.2,405.5 517.1,404.8 526.0,391.5 533.3,375.3 539.2,371.6 545.1,360.5 554.0,347.2 562.8,326.6 570.2,318.4 573.1,318.4 582.0,309.6 593.8,309.6 600.3,324.5 606.0,324.5 617.6,310.8 632.0,303.0 645.0,301.5 656.4,290.7 665.0,282.0 669.4,270.5 676.6,262.0 678.7,260.5 682.3,272.0 688.0,290.7 693.8,305.0 700.0,326.4 704.8,337.2 712.0,346.8 716.8,357.0 721.6,357.0 726.4,352.8 737.2,339.6 740.8,339.6 745.6,334.2 750.4,330.6 752.8,327.6 754.6,328.8 755.2,339.6 756.4,351.6 758.8,363.5 762.4,372.0 767.0,390.6 772.7,408.0 778.5,419.4 782.3,434.8 785.2,450.0 788.0,470.0 790.0,480.0 830.0,480.0 833.6,467.5 836.7,449.0 852.0,447.6 867.3,440.0 877.9,410.0 881.1,403.2" fill="none" stroke="#A0522D" stroke-width="2" stroke-linejoin="round"/><polyline points="8.0,315.5 12.0,315.5 12.0,316.5 33.0,316.5 60.0,318.0 70.0,321.0 88.0,321.0 96.6,320.4 107.0,319.7 120.3,315.8 138.8,310.5 152.0,306.5 165.0,303.2 178.3,300.0 186.0,298.0 197.2,293.0 210.4,288.3 223.6,285.0 236.8,281.7 247.3,280.4 263.0,280.4 284.0,279.0 288.6,277.5 301.8,278.8 315.0,280.2 328.2,277.5 341.4,277.5 353.2,278.8 361.2,280.8 374.3,280.2 382.0,281.5 394.4,285.0 408.8,291.5 423.2,298.0 437.6,306.6 452.0,314.5 466.3,319.6 480.0,322.4 486.6,322.6 499.6,318.3 514.0,315.5 528.4,313.3 542.7,310.4 557.0,304.0 566.0,301.4 578.6,296.4 593.7,295.0 603.8,286.3 616.3,278.0 632.0,269.0 642.0,260.5 656.4,253.3 670.8,251.1 685.2,254.0 702.8,261.9 717.2,267.0 728.7,269.8 740.2,270.5 751.7,271.2 757.5,272.0 763.2,280.6 773.3,293.4 784.8,306.4 797.7,320.0 809.2,326.3 818.8,332.0 828.4,335.0 839.0,338.9 849.8,342.1 860.6,345.4 868.2,347.5 879.0,347.5 881.1,349.2" fill="none" stroke="#00BFFF" stroke-width="1"/><rect x="9" y="322" width="1" height="21" fill="#00BFFF"/><rect x="8" y="322" width="3" height="21" fill="#00BFFF"/><rect x="9" y="323" width="1" height="19" fill="#4169E1"/><rect x="13" y="320" width="1" height="8" fill="#FF69B4"/><rect x="12" y="322" width="3" height="5" fill="#FF69B4"/><rect x="13" y="323" width="1" height="3" fill="#FFB6C1"/><rect x="17" y="314" width="1" height="12" fill="#00BFFF"/><rect x="16" y="317" width="3" height="7" fill="#00BFFF"/><rect x="17" y="318" width="1" height="5" fill="#4169E1"/><rect x="21" y="314" width="1" height="12" fill="#FF69B4"/><rect x="20" y="314" width="3" height="8" fill="#FF69B4"/><rect x="21" y="315" width="1" height="6" fill="#FFB6C1"/><rect x="25" y="314" width="1" height="29" fill="#00BFFF"/><rect x="24" y="319" width="3" height="5" fill="#00BFFF"/><rect x="25" y="320" width="1" height="3" fill="#4169E1"/><rect x="29" y="318" width="1" height="10" fill="#FF69B4"/><rect x="28" y="318" width="3" height="6" fill="#FF69B4"/><rect x="29" y="319" width="1" height="4" fill="#FFB6C1"/><rect x="33" y="316" width="1" height="9" fill="#00FF00"/><rect x="32" y="320" width="3" height="1" fill="#00FF00"/><rect x="37" y="314" width="1" height="12" fill="#00BFFF"/><rect x="36" y="316" width="3" height="8" fill="#00BFFF"/><rect x="37" y="317" width="1" height="6" fill="#4169E1"/><rect x="41" y="312" width="1" height="7" fill="#FF69B4"/><rect x="40" y="314" width="3" height="3" fill="#FF69B4"/><rect x="41" y="315" width="1" height="1" fill="#FFB6C1"/><rect x="45" y="312" width="1" height="14" fill="#FF69B4"/><rect x="44" y="314" width="3" height="12" fill="#FF69B4"/><rect x="45" y="315" width="1" height="10" fill="#FFB6C1"/><rect x="49" y="322" width="1" height="6" fill="#00FF00"/><rect x="48" y="325" width="3" height="1" fill="#00FF00"/><rect x="53" y="316" width="1" height="10" fill="#00BFFF"/><rect x="52" y="319" width="3" height="7" fill="#00BFFF"/><rect x="53" y="320" width="1" height="5" fill="#4169E1"/><rect x="57" y="316" width="1" height="12" fill="#FF69B4"/><rect x="56" y="316" width="3" height="8" fill="#FF69B4"/><rect x="57" y="317" width="1" height="6" fill="#FFB6C1"/><rect x="61" y="322" width="1" height="27" fill="#FF69B4"/><rect x="60" y="324" width="3" height="23" fill="#FF69B4"/><rect x="61" y="325" width="1" height="21" fill="#FFB6C1"/><rect x="65" y="335" width="1" height="17" fill="#00FF00"/><rect x="64" y="348" width="3" height="1" fill="#00FF00"/><rect x="69" y="343" width="1" height="10" fill="#00BFFF"/><rect x="68" y="345" width="3" height="6" fill="#00BFFF"/><rect x="69" y="346" width="1" height="4" fill="#4169E1"/><rect x="73" y="339" width="1" height="10" fill="#00BFFF"/><rect x="72" y="339" width="3" height="10" fill="#00BFFF"/><rect x="73" y="340" width="1" height="8" fill="#4169E1"/><rect x="77" y="316" width="1" height="27" fill="#00BFFF"/><rect x="76" y="321" width="3" height="22" fill="#00BFFF"/><rect x="77" y="322" width="1" height="20" fill="#4169E1"/><rect x="81" y="320" width="1" height="11" fill="#FF69B4"/><rect x="80" y="322" width="3" height="4" fill="#FF69B4"/><rect x="81" y="323" width="1" height="2" fill="#FFB6C1"/><rect x="85" y="322" width="1" height="13" fill="#FF69B4"/><rect x="84" y="322" width="3" height="4" fill="#FF69B4"/><rect x="85" y="323" width="1" height="2" fill="#FFB6C1"/><rect x="89" y="318" width="1" height="6" fill="#00BFFF"/><rect x="88" y="320" width="3" height="3" fill="#00BFFF"/><rect x="89" y="321" width="1" height="1" fill="#4169E1"/><rect x="93" y="318" width="1" height="5" fill="#00BFFF"/><rect x="92" y="318" width="3" height="5" fill="#00BFFF"/><rect x="93" y="319" width="1" height="3" fill="#4169E1"/><rect x="97" y="303" width="1" height="14" fill="#00BFFF"/><rect x="96" y="304" width="3" height="13" fill="#00BFFF"/><rect x="97" y="305" width="1" height="11" fill="#4169E1"/><rect x="101" y="305" width="1" height="10" fill="#FF69B4"/><rect x="100" y="306" width="3" height="5" fill="#FF69B4"/><rect x="101" y="307" width="1" height="3" fill="#FFB6C1"/><rect x="105" y="307" width="1" height="12" fill="#FF69B4"/><rect x="104" y="308" width="3" height="10" fill="#FF69B4"/><rect x="105" y="309" width="1" height="8" fill="#FFB6C1"/><rect x="109" y="309" width="1" height="6" fill="#00BFFF"/><rect x="108" y="309" width="3" height="6" fill="#00BFFF"/><rect x="109" y="310" width="1" height="4" fill="#4169E1"/><rect x="113" y="280" width="1" height="31" fill="#00BFFF"/><rect x="112" y="293" width="3" height="16" fill="#00BFFF"/><rect x="113" y="294" width="1" height="14" fill="#4169E1"/><rect x="117" y="282" width="1" height="15" fill="#00BFFF"/><rect x="116" y="284" width="3" height="12" fill="#00BFFF"/><rect x="117" y="285" width="1" height="10" fill="#4169E1"/><rect x="121" y="276" width="1" height="10" fill="#FF69B4"/><rect x="120" y="282" width="3" height="4" fill="#FF69B4"/><rect x="121" y="283" width="1" height="2" fill="#FFB6C1"/><rect x="125" y="280" width="1" height="19" fill="#00FF00"/><rect x="124" y="282" width="3" height="1" fill="#00FF00"/><rect x="129" y="263" width="1" height="25" fill="#00BFFF"/><rect x="128" y="264" width="3" height="21" fill="#00BFFF"/><rect x="129" y="265" width="1" height="19" fill="#4169E1"/><rect x="133" y="264" width="1" height="18" fill="#FF69B4"/><rect x="132" y="265" width="3" height="16" fill="#FF69B4"/><rect x="133" y="266" width="1" height="14" fill="#FFB6C1"/><rect x="137" y="279" width="1" height="9" fill="#00BFFF"/><rect x="136" y="280" width="3" height="3" fill="#00BFFF"/><rect x="137" y="281" width="1" height="1" fill="#4169E1"/><rect x="141" y="278" width="1" height="6" fill="#00FF00"/><rect x="140" y="280" width="3" height="1" fill="#00FF00"/><rect x="145" y="276" width="1" height="10" fill="#FF69B4"/><rect x="144" y="277" width="3" height="5" fill="#FF69B4"/><rect x="145" y="278" width="1" height="3" fill="#FFB6C1"/><rect x="149" y="274" width="1" height="18" fill="#00BFFF"/><rect x="148" y="275" width="3" height="4" fill="#00BFFF"/><rect x="149" y="276" width="1" height="2" fill="#4169E1"/><rect x="153" y="263" width="1" height="12" fill="#00BFFF"/><rect x="152" y="270" width="3" height="4" fill="#00BFFF"/><rect x="153" y="271" width="1" height="2" fill="#4169E1"/><rect x="157" y="270" width="1" height="7" fill="#FF69B4"/><rect x="156" y="272" width="3" height="3" fill="#FF69B4"/><rect x="157" y="273" width="1" height="1" fill="#FFB6C1"/><rect x="161" y="272" width="1" height="5" fill="#FF69B4"/><rect x="160" y="272" width="3" height="4" fill="#FF69B4"/><rect x="161" y="273" width="1" height="2" fill="#FFB6C1"/><rect x="165" y="274" width="1" height="12" fill="#FF69B4"/><rect x="164" y="275" width="3" height="9" fill="#FF69B4"/><rect x="165" y="276" width="1" height="7" fill="#FFB6C1"/><rect x="169" y="273" width="1" height="12" fill="#00BFFF"/><rect x="168" y="274" width="3" height="11" fill="#00BFFF"/><rect x="169" y="275" width="1" height="9" fill="#4169E1"/><rect x="173" y="272" width="1" height="12" fill="#FF69B4"/><rect x="172" y="272" width="3" height="5" fill="#FF69B4"/><rect x="173" y="273" width="1" height="3" fill="#FFB6C1"/><rect x="177" y="272" width="1" height="8" fill="#FF69B4"/><rect x="176" y="274" width="3" height="3" fill="#FF69B4"/><rect x="177" y="275" width="1" height="1" fill="#FFB6C1"/><rect x="181" y="272" width="1" height="8" fill="#00BFFF"/><rect x="180" y="272" width="3" height="5" fill="#00BFFF"/><rect x="181" y="273" width="1" height="3" fill="#4169E1"/><rect x="185" y="259" width="1" height="17" fill="#00BFFF"/><rect x="184" y="263" width="3" height="12" fill="#00BFFF"/><rect x="185" y="264" width="1" height="10" fill="#4169E1"/><rect x="189" y="253" width="1" height="14" fill="#00BFFF"/><rect x="188" y="253" width="3" height="13" fill="#00BFFF"/><rect x="189" y="254" width="1" height="11" fill="#4169E1"/><rect x="193" y="242" width="1" height="16" fill="#00BFFF"/><rect x="192" y="244" width="3" height="12" fill="#00BFFF"/><rect x="193" y="245" width="1" height="10" fill="#4169E1"/><rect x="197" y="244" width="1" height="10" fill="#FF69B4"/><rect x="196" y="246" width="3" height="6" fill="#FF69B4"/><rect x="197" y="247" width="1" height="4" fill="#FFB6C1"/><rect x="201" y="248" width="1" height="17" fill="#FF69B4"/><rect x="200" y="249" width="3" height="15" fill="#FF69B4"/><rect x="201" y="250" width="1" height="13" fill="#FFB6C1"/><rect x="205" y="253" width="1" height="12" fill="#00BFFF"/><rect x="204" y="253" width="3" height="11" fill="#00BFFF"/><rect x="205" y="254" width="1" height="9" fill="#4169E1"/><rect x="209" y="253" width="1" height="10" fill="#FF69B4"/><rect x="208" y="255" width="3" height="7" fill="#FF69B4"/><rect x="209" y="256" width="1" height="5" fill="#FFB6C1"/><rect x="213" y="245" width="1" height="18" fill="#00BFFF"/><rect x="212" y="246" width="3" height="15" fill="#00BFFF"/><rect x="213" y="247" width="1" height="13" fill="#4169E1"/><rect x="217" y="244" width="1" height="13" fill="#FF69B4"/><rect x="216" y="245" width="3" height="11" fill="#FF69B4"/><rect x="217" y="246" width="1" height="9" fill="#FFB6C1"/><rect x="221" y="253" width="1" height="8" fill="#00BFFF"/><rect x="220" y="255" width="3" height="3" fill="#00BFFF"/><rect x="221" y="256" width="1" height="1" fill="#4169E1"/><rect x="225" y="253" width="1" height="6" fill="#FF69B4"/><rect x="224" y="253" width="3" height="5" fill="#FF69B4"/><rect x="225" y="254" width="1" height="3" fill="#FFB6C1"/><rect x="229" y="255" width="1" height="6" fill="#FF69B4"/><rect x="228" y="255" width="3" height="5" fill="#FF69B4"/><rect x="229" y="256" width="1" height="3" fill="#FFB6C1"/><rect x="233" y="255" width="1" height="12" fill="#FF69B4"/><rect x="232" y="261" width="3" height="3" fill="#FF69B4"/><rect x="233" y="262" width="1" height="1" fill="#FFB6C1"/><rect x="237" y="260" width="1" height="6" fill="#FF69B4"/><rect x="236" y="261" width="3" height="4" fill="#FF69B4"/><rect x="237" y="262" width="1" height="2" fill="#FFB6C1"/><rect x="241" y="263" width="1" height="5" fill="#00FF00"/><rect x="240" y="265" width="3" height="1" fill="#00FF00"/><rect x="245" y="263" width="1" height="11" fill="#00BFFF"/><rect x="244" y="265" width="3" height="3" fill="#00BFFF"/><rect x="245" y="266" width="1" height="1" fill="#4169E1"/><rect x="249" y="267" width="1" height="5" fill="#FF69B4"/><rect x="248" y="267" width="3" height="5" fill="#FF69B4"/><rect x="249" y="268" width="1" height="3" fill="#FFB6C1"/><rect x="253" y="267" width="1" height="14" fill="#FF69B4"/><rect x="252" y="267" width="3" height="5" fill="#FF69B4"/><rect x="253" y="268" width="1" height="3" fill="#FFB6C1"/><rect x="257" y="267" width="1" height="5" fill="#FF69B4"/><rect x="256" y="267" width="3" height="5" fill="#FF69B4"/><rect x="257" y="268" width="1" height="3" fill="#FFB6C1"/><rect x="261" y="271" width="1" height="12" fill="#FF69B4"/><rect x="260" y="272" width="3" height="7" fill="#FF69B4"/><rect x="261" y="273" width="1" height="5" fill="#FFB6C1"/><rect x="265" y="279" width="1" height="14" fill="#FF69B4"/><rect x="264" y="280" width="3" height="10" fill="#FF69B4"/><rect x="265" y="281" width="1" height="8" fill="#FFB6C1"/><rect x="269" y="267" width="1" height="22" fill="#00BFFF"/><rect x="268" y="267" width="3" height="20" fill="#00BFFF"/><rect x="269" y="268" width="1" height="18" fill="#4169E1"/><rect x="273" y="265" width="1" height="11" fill="#00FF00"/><rect x="272" y="267" width="3" height="1" fill="#00FF00"/><rect x="277" y="267" width="1" height="9" fill="#FF69B4"/><rect x="276" y="267" width="3" height="9" fill="#FF69B4"/><rect x="277" y="268" width="1" height="7" fill="#FFB6C1"/><rect x="281" y="267" width="1" height="7" fill="#00BFFF"/><rect x="280" y="267" width="3" height="7" fill="#00BFFF"/><rect x="281" y="268" width="1" height="5" fill="#4169E1"/><rect x="285" y="263" width="1" height="9" fill="#00BFFF"/><rect x="284" y="264" width="3" height="7" fill="#00BFFF"/><rect x="285" y="265" width="1" height="5" fill="#4169E1"/><rect x="289" y="257" width="1" height="10" fill="#00BFFF"/><rect x="288" y="262" width="3" height="5" fill="#00BFFF"/><rect x="289" y="263" width="1" height="3" fill="#4169E1"/><rect x="293" y="262" width="1" height="11" fill="#FF69B4"/><rect x="292" y="263" width="3" height="10" fill="#FF69B4"/><rect x="293" y="264" width="1" height="8" fill="#FFB6C1"/><rect x="297" y="270" width="1" height="23" fill="#FF69B4"/><rect x="296" y="272" width="3" height="20" fill="#FF69B4"/><rect x="297" y="273" width="1" height="18" fill="#FFB6C1"/><rect x="301" y="287" width="1" height="29" fill="#FF69B4"/><rect x="300" y="288" width="3" height="24" fill="#FF69B4"/><rect x="301" y="289" width="1" height="22" fill="#FFB6C1"/><rect x="305" y="297" width="1" height="12" fill="#00BFFF"/><rect x="304" y="301" width="3" height="7" fill="#00BFFF"/><rect x="305" y="302" width="1" height="5" fill="#4169E1"/><rect x="309" y="298" width="1" height="11" fill="#FF69B4"/><rect x="308" y="299" width="3" height="6" fill="#FF69B4"/><rect x="309" y="300" width="1" height="4" fill="#FFB6C1"/><rect x="313" y="266" width="1" height="39" fill="#00BFFF"/><rect x="312" y="272" width="3" height="32" fill="#00BFFF"/><rect x="313" y="273" width="1" height="30" fill="#4169E1"/><rect x="317" y="261" width="1" height="15" fill="#00BFFF"/><rect x="316" y="265" width="3" height="10" fill="#00BFFF"/><rect x="317" y="266" width="1" height="8" fill="#4169E1"/><rect x="321" y="246" width="1" height="25" fill="#00BFFF"/><rect x="320" y="251" width="3" height="17" fill="#00BFFF"/><rect x="321" y="252" width="1" height="15" fill="#4169E1"/><rect x="325" y="251" width="1" height="12" fill="#FF69B4"/><rect x="324" y="252" width="3" height="9" fill="#FF69B4"/><rect x="325" y="253" width="1" height="7" fill="#FFB6C1"/><rect x="329" y="248" width="1" height="15" fill="#00BFFF"/><rect x="328" y="260" width="3" height="3" fill="#00BFFF"/><rect x="329" y="261" width="1" height="1" fill="#4169E1"/><rect x="333" y="246" width="1" height="21" fill="#00FF00"/><rect x="332" y="261" width="3" height="1" fill="#00FF00"/><rect x="337" y="260" width="1" height="30" fill="#FF69B4"/><rect x="336" y="262" width="3" height="26" fill="#FF69B4"/><rect x="337" y="263" width="1" height="24" fill="#FFB6C1"/><rect x="341" y="267" width="1" height="21" fill="#00BFFF"/><rect x="340" y="276" width="3" height="10" fill="#00BFFF"/><rect x="341" y="277" width="1" height="8" fill="#4169E1"/><rect x="345" y="272" width="1" height="31" fill="#FF69B4"/><rect x="344" y="274" width="3" height="16" fill="#FF69B4"/><rect x="345" y="275" width="1" height="14" fill="#FFB6C1"/><rect x="349" y="278" width="1" height="25" fill="#FF69B4"/><rect x="348" y="286" width="3" height="4" fill="#FF69B4"/><rect x="349" y="287" width="1" height="2" fill="#FFB6C1"/><rect x="353" y="285" width="1" height="26" fill="#FF69B4"/><rect x="352" y="286" width="3" height="23" fill="#FF69B4"/><rect x="353" y="287" width="1" height="21" fill="#FFB6C1"/><rect x="357" y="303" width="1" height="23" fill="#FF69B4"/><rect x="356" y="310" width="3" height="14" fill="#FF69B4"/><rect x="357" y="311" width="1" height="12" fill="#FFB6C1"/><rect x="361" y="304" width="1" height="23" fill="#00BFFF"/><rect x="360" y="305" width="3" height="20" fill="#00BFFF"/><rect x="361" y="306" width="1" height="18" fill="#4169E1"/><rect x="365" y="260" width="1" height="3" fill="#00BFFF"/><rect x="364" y="260" width="3" height="3" fill="#00BFFF"/><rect x="365" y="261" width="1" height="1" fill="#4169E1"/><rect x="369" y="261" width="1" height="22" fill="#FF69B4"/><rect x="368" y="261" width="3" height="6" fill="#FF69B4"/><rect x="369" y="262" width="1" height="4" fill="#FFB6C1"/><rect x="373" y="263" width="1" height="15" fill="#FF69B4"/><rect x="372" y="267" width="3" height="10" fill="#FF69B4"/><rect x="373" y="268" width="1" height="8" fill="#FFB6C1"/><rect x="377" y="274" width="1" height="24" fill="#FF69B4"/><rect x="376" y="278" width="3" height="18" fill="#FF69B4"/><rect x="377" y="279" width="1" height="16" fill="#FFB6C1"/><rect x="381" y="287" width="1" height="21" fill="#FF69B4"/><rect x="380" y="292" width="3" height="15" fill="#FF69B4"/><rect x="381" y="293" width="1" height="13" fill="#FFB6C1"/><rect x="385" y="299" width="1" height="19" fill="#00FF00"/><rect x="384" y="303" width="3" height="1" fill="#00FF00"/><rect x="389" y="304" width="1" height="16" fill="#FF69B4"/><rect x="388" y="305" width="3" height="14" fill="#FF69B4"/><rect x="389" y="306" width="1" height="12" fill="#FFB6C1"/><rect x="393" y="305" width="1" height="17" fill="#00BFFF"/><rect x="392" y="306" width="3" height="9" fill="#00BFFF"/><rect x="393" y="307" width="1" height="7" fill="#4169E1"/><rect x="397" y="301" width="1" height="8" fill="#FF69B4"/><rect x="396" y="305" width="3" height="3" fill="#FF69B4"/><rect x="397" y="306" width="1" height="1" fill="#FFB6C1"/><rect x="401" y="305" width="1" height="23" fill="#FF69B4"/><rect x="400" y="305" width="3" height="13" fill="#FF69B4"/><rect x="401" y="306" width="1" height="11" fill="#FFB6C1"/><rect x="405" y="316" width="1" height="38" fill="#FF69B4"/><rect x="404" y="318" width="3" height="34" fill="#FF69B4"/><rect x="405" y="319" width="1" height="32" fill="#FFB6C1"/><rect x="409" y="341" width="1" height="25" fill="#FF69B4"/><rect x="408" y="352" width="3" height="12" fill="#FF69B4"/><rect x="409" y="353" width="1" height="10" fill="#FFB6C1"/><rect x="413" y="352" width="1" height="14" fill="#00BFFF"/><rect x="412" y="353" width="3" height="9" fill="#00BFFF"/><rect x="413" y="354" width="1" height="7" fill="#4169E1"/><rect x="417" y="343" width="1" height="13" fill="#00BFFF"/><rect x="416" y="350" width="3" height="5" fill="#00BFFF"/><rect x="417" y="351" width="1" height="3" fill="#4169E1"/><rect x="421" y="333" width="1" height="21" fill="#00BFFF"/><rect x="420" y="335" width="3" height="19" fill="#00BFFF"/><rect x="421" y="336" width="1" height="17" fill="#4169E1"/><rect x="425" y="331" width="1" height="9" fill="#FF69B4"/><rect x="424" y="333" width="3" height="5" fill="#FF69B4"/><rect x="425" y="334" width="1" height="3" fill="#FFB6C1"/><rect x="429" y="331" width="1" height="39" fill="#FF69B4"/><rect x="428" y="335" width="3" height="29" fill="#FF69B4"/><rect x="429" y="336" width="1" height="27" fill="#FFB6C1"/><rect x="433" y="356" width="1" height="23" fill="#FF69B4"/><rect x="432" y="361" width="3" height="6" fill="#FF69B4"/><rect x="433" y="362" width="1" height="4" fill="#FFB6C1"/><rect x="437" y="367" width="1" height="32" fill="#FF69B4"/><rect x="436" y="369" width="3" height="19" fill="#FF69B4"/><rect x="437" y="370" width="1" height="17" fill="#FFB6C1"/><rect x="441" y="372" width="1" height="16" fill="#00BFFF"/><rect x="440" y="373" width="3" height="14" fill="#00BFFF"/><rect x="441" y="374" width="1" height="12" fill="#4169E1"/><rect x="445" y="369" width="1" height="23" fill="#FF69B4"/><rect x="444" y="371" width="3" height="20" fill="#FF69B4"/><rect x="445" y="372" width="1" height="18" fill="#FFB6C1"/><rect x="449" y="372" width="1" height="22" fill="#00BFFF"/><rect x="448" y="373" width="3" height="20" fill="#00BFFF"/><rect x="449" y="374" width="1" height="18" fill="#4169E1"/><rect x="453" y="340" width="1" height="40" fill="#00BFFF"/><rect x="452" y="341" width="3" height="31" fill="#00BFFF"/><rect x="453" y="342" width="1" height="29" fill="#4169E1"/><rect x="457" y="316" width="1" height="48" fill="#FF69B4"/><rect x="456" y="343" width="3" height="21" fill="#FF69B4"/><rect x="457" y="344" width="1" height="19" fill="#FFB6C1"/><rect x="461" y="341" width="1" height="25" fill="#00BFFF"/><rect x="460" y="356" width="3" height="9" fill="#00BFFF"/><rect x="461" y="357" width="1" height="7" fill="#4169E1"/><rect x="465" y="339" width="1" height="20" fill="#00BFFF"/><rect x="464" y="356" width="3" height="3" fill="#00BFFF"/><rect x="465" y="357" width="1" height="1" fill="#4169E1"/><rect x="469" y="341" width="1" height="19" fill="#00BFFF"/><rect x="468" y="347" width="3" height="12" fill="#00BFFF"/><rect x="469" y="348" width="1" height="10" fill="#4169E1"/><rect x="473" y="345" width="1" height="19" fill="#FF69B4"/><rect x="472" y="345" width="3" height="18" fill="#FF69B4"/><rect x="473" y="346" width="1" height="16" fill="#FFB6C1"/><rect x="477" y="345" width="1" height="22" fill="#00BFFF"/><rect x="476" y="347" width="3" height="17" fill="#00BFFF"/><rect x="477" y="348" width="1" height="15" fill="#4169E1"/><rect x="481" y="335" width="1" height="14" fill="#00BFFF"/><rect x="480" y="339" width="3" height="9" fill="#00BFFF"/><rect x="481" y="340" width="1" height="7" fill="#4169E1"/><rect x="485" y="328" width="1" height="24" fill="#00BFFF"/><rect x="484" y="329" width="3" height="14" fill="#00BFFF"/><rect x="485" y="330" width="1" height="12" fill="#4169E1"/><rect x="489" y="295" width="1" height="33" fill="#00BFFF"/><rect x="488" y="299" width="3" height="28" fill="#00BFFF"/><rect x="489" y="300" width="1" height="26" fill="#4169E1"/><rect x="493" y="293" width="1" height="23" fill="#FF69B4"/><rect x="492" y="301" width="3" height="15" fill="#FF69B4"/><rect x="493" y="302" width="1" height="13" fill="#FFB6C1"/><rect x="497" y="303" width="1" height="12" fill="#00BFFF"/><rect x="496" y="310" width="3" height="4" fill="#00BFFF"/><rect x="497" y="311" width="1" height="2" fill="#4169E1"/><rect x="501" y="287" width="1" height="24" fill="#00BFFF"/><rect x="500" y="288" width="3" height="20" fill="#00BFFF"/><rect x="501" y="289" width="1" height="18" fill="#4169E1"/><rect x="505" y="282" width="1" height="20" fill="#00BFFF"/><rect x="504" y="282" width="3" height="10" fill="#00BFFF"/><rect x="505" y="283" width="1" height="8" fill="#4169E1"/><rect x="509" y="263" width="1" height="22" fill="#00BFFF"/><rect x="508" y="282" width="3" height="3" fill="#00BFFF"/><rect x="509" y="283" width="1" height="1" fill="#4169E1"/><rect x="513" y="272" width="1" height="13" fill="#00FF00"/><rect x="512" y="284" width="3" height="1" fill="#00FF00"/><rect x="517" y="270" width="1" height="25" fill="#FF69B4"/><rect x="516" y="286" width="3" height="4" fill="#FF69B4"/><rect x="517" y="287" width="1" height="2" fill="#FFB6C1"/><rect x="521" y="284" width="1" height="27" fill="#FF69B4"/><rect x="520" y="284" width="3" height="23" fill="#FF69B4"/><rect x="521" y="285" width="1" height="21" fill="#FFB6C1"/><rect x="525" y="295" width="1" height="11" fill="#00BFFF"/><rect x="524" y="300" width="3" height="4" fill="#00BFFF"/><rect x="525" y="301" width="1" height="2" fill="#4169E1"/><rect x="529" y="295" width="1" height="8" fill="#00BFFF"/><rect x="528" y="299" width="3" height="3" fill="#00BFFF"/><rect x="529" y="300" width="1" height="1" fill="#4169E1"/><rect x="533" y="297" width="1" height="11" fill="#00BFFF"/><rect x="532" y="299" width="3" height="3" fill="#00BFFF"/><rect x="533" y="300" width="1" height="1" fill="#4169E1"/><rect x="537" y="280" width="1" height="20" fill="#00BFFF"/><rect x="536" y="280" width="3" height="18" fill="#00BFFF"/><rect x="537" y="281" width="1" height="16" fill="#4169E1"/><rect x="541" y="270" width="1" height="12" fill="#FF69B4"/><rect x="540" y="278" width="3" height="3" fill="#FF69B4"/><rect x="541" y="279" width="1" height="1" fill="#FFB6C1"/><rect x="545" y="277" width="1" height="15" fill="#00BFFF"/><rect x="544" y="278" width="3" height="5" fill="#00BFFF"/><rect x="545" y="279" width="1" height="3" fill="#4169E1"/><rect x="549" y="265" width="1" height="17" fill="#00BFFF"/><rect x="548" y="274" width="3" height="7" fill="#00BFFF"/><rect x="549" y="275" width="1" height="5" fill="#4169E1"/><rect x="553" y="272" width="1" height="18" fill="#FF69B4"/><rect x="552" y="272" width="3" height="4" fill="#FF69B4"/><rect x="553" y="273" width="1" height="2" fill="#FFB6C1"/><rect x="557" y="250" width="1" height="28" fill="#00BFFF"/><rect x="556" y="251" width="3" height="26" fill="#00BFFF"/><rect x="557" y="252" width="1" height="24" fill="#4169E1"/><rect x="561" y="244" width="1" height="15" fill="#00FF00"/><rect x="560" y="254" width="3" height="1" fill="#00FF00"/><rect x="565" y="251" width="1" height="10" fill="#FF69B4"/><rect x="564" y="251" width="3" height="9" fill="#FF69B4"/><rect x="565" y="252" width="1" height="7" fill="#FFB6C1"/><rect x="569" y="255" width="1" height="10" fill="#FF69B4"/><rect x="568" y="257" width="3" height="3" fill="#FF69B4"/><rect x="569" y="258" width="1" height="1" fill="#FFB6C1"/><rect x="573" y="248" width="1" height="13" fill="#00FF00"/><rect x="572" y="254" width="3" height="1" fill="#00FF00"/><rect x="577" y="244" width="1" height="17" fill="#00BFFF"/><rect x="576" y="253" width="3" height="3" fill="#00BFFF"/><rect x="577" y="254" width="1" height="1" fill="#4169E1"/><rect x="581" y="253" width="1" height="21" fill="#FF69B4"/><rect x="580" y="254" width="3" height="19" fill="#FF69B4"/><rect x="581" y="255" width="1" height="17" fill="#FFB6C1"/><rect x="585" y="272" width="1" height="23" fill="#FF69B4"/><rect x="584" y="274" width="3" height="21" fill="#FF69B4"/><rect x="585" y="275" width="1" height="19" fill="#FFB6C1"/><rect x="589" y="280" width="1" height="17" fill="#00BFFF"/><rect x="588" y="282" width="3" height="15" fill="#00BFFF"/><rect x="589" y="283" width="1" height="13" fill="#4169E1"/><rect x="593" y="267" width="1" height="18" fill="#00BFFF"/><rect x="592" y="267" width="3" height="18" fill="#00BFFF"/><rect x="593" y="268" width="1" height="16" fill="#4169E1"/><rect x="597" y="200" width="1" height="76" fill="#00BFFF"/><rect x="596" y="208" width="3" height="63" fill="#00BFFF"/><rect x="597" y="209" width="1" height="61" fill="#4169E1"/><rect x="601" y="187" width="1" height="38" fill="#00BFFF"/><rect x="600" y="187" width="3" height="20" fill="#00BFFF"/><rect x="601" y="188" width="1" height="18" fill="#4169E1"/><rect x="605" y="185" width="1" height="20" fill="#FF69B4"/><rect x="604" y="185" width="3" height="15" fill="#FF69B4"/><rect x="605" y="186" width="1" height="13" fill="#FFB6C1"/><rect x="609" y="198" width="1" height="31" fill="#FF69B4"/><rect x="608" y="199" width="3" height="29" fill="#FF69B4"/><rect x="609" y="200" width="1" height="27" fill="#FFB6C1"/><rect x="613" y="211" width="1" height="18" fill="#00BFFF"/><rect x="612" y="217" width="3" height="10" fill="#00BFFF"/><rect x="613" y="218" width="1" height="8" fill="#4169E1"/><rect x="617" y="217" width="1" height="29" fill="#FF69B4"/><rect x="616" y="219" width="3" height="13" fill="#FF69B4"/><rect x="617" y="220" width="1" height="11" fill="#FFB6C1"/><rect x="621" y="212" width="1" height="24" fill="#00BFFF"/><rect x="620" y="213" width="3" height="22" fill="#00BFFF"/><rect x="621" y="214" width="1" height="20" fill="#4169E1"/><rect x="625" y="192" width="1" height="29" fill="#00BFFF"/><rect x="624" y="196" width="3" height="16" fill="#00BFFF"/><rect x="625" y="197" width="1" height="14" fill="#4169E1"/><rect x="629" y="194" width="1" height="23" fill="#FF69B4"/><rect x="628" y="194" width="3" height="22" fill="#FF69B4"/><rect x="629" y="195" width="1" height="20" fill="#FFB6C1"/><rect x="633" y="185" width="1" height="51" fill="#00BFFF"/><rect x="632" y="192" width="3" height="23" fill="#00BFFF"/><rect x="633" y="193" width="1" height="21" fill="#4169E1"/><rect x="637" y="143" width="1" height="49" fill="#00BFFF"/><rect x="636" y="156" width="3" height="36" fill="#00BFFF"/><rect x="637" y="157" width="1" height="34" fill="#4169E1"/><rect x="641" y="152" width="1" height="42" fill="#FF69B4"/><rect x="640" y="154" width="3" height="33" fill="#FF69B4"/><rect x="641" y="155" width="1" height="31" fill="#FFB6C1"/><rect x="645" y="164" width="1" height="23" fill="#00FF00"/><rect x="644" y="183" width="3" height="1" fill="#00FF00"/><rect x="649" y="182" width="1" height="22" fill="#FF69B4"/><rect x="648" y="185" width="3" height="17" fill="#FF69B4"/><rect x="649" y="186" width="1" height="15" fill="#FFB6C1"/><rect x="653" y="190" width="1" height="14" fill="#00BFFF"/><rect x="652" y="190" width="3" height="10" fill="#00BFFF"/><rect x="653" y="191" width="1" height="8" fill="#4169E1"/><rect x="657" y="191" width="1" height="37" fill="#FF69B4"/><rect x="656" y="192" width="3" height="33" fill="#FF69B4"/><rect x="657" y="193" width="1" height="31" fill="#FFB6C1"/><rect x="661" y="219" width="1" height="23" fill="#00BFFF"/><rect x="660" y="221" width="3" height="6" fill="#00BFFF"/><rect x="661" y="222" width="1" height="4" fill="#4169E1"/><rect x="665" y="214" width="1" height="34" fill="#FF69B4"/><rect x="664" y="222" width="3" height="21" fill="#FF69B4"/><rect x="665" y="223" width="1" height="19" fill="#FFB6C1"/><rect x="669" y="223" width="1" height="28" fill="#00BFFF"/><rect x="668" y="226" width="3" height="23" fill="#00BFFF"/><rect x="669" y="227" width="1" height="21" fill="#4169E1"/><rect x="673" y="224" width="1" height="34" fill="#FF69B4"/><rect x="672" y="230" width="3" height="28" fill="#FF69B4"/><rect x="673" y="231" width="1" height="26" fill="#FFB6C1"/><rect x="677" y="251" width="1" height="10" fill="#FF69B4"/><rect x="676" y="255" width="3" height="4" fill="#FF69B4"/><rect x="677" y="256" width="1" height="2" fill="#FFB6C1"/><rect x="681" y="251" width="1" height="26" fill="#FF69B4"/><rect x="680" y="255" width="3" height="18" fill="#FF69B4"/><rect x="681" y="256" width="1" height="16" fill="#FFB6C1"/><rect x="685" y="269" width="1" height="28" fill="#FF69B4"/><rect x="684" y="270" width="3" height="19" fill="#FF69B4"/><rect x="685" y="271" width="1" height="17" fill="#FFB6C1"/><rect x="689" y="288" width="1" height="29" fill="#FF69B4"/><rect x="688" y="290" width="3" height="22" fill="#FF69B4"/><rect x="689" y="291" width="1" height="20" fill="#FFB6C1"/><rect x="693" y="299" width="1" height="17" fill="#00FF00"/><rect x="692" y="309" width="3" height="1" fill="#00FF00"/><rect x="697" y="301" width="1" height="14" fill="#FF69B4"/><rect x="696" y="305" width="3" height="6" fill="#FF69B4"/><rect x="697" y="306" width="1" height="4" fill="#FFB6C1"/><rect x="701" y="295" width="1" height="20" fill="#00BFFF"/><rect x="700" y="310" width="3" height="4" fill="#00BFFF"/><rect x="701" y="311" width="1" height="2" fill="#4169E1"/><rect x="705" y="301" width="1" height="12" fill="#00BFFF"/><rect x="704" y="305" width="3" height="4" fill="#00BFFF"/><rect x="705" y="306" width="1" height="2" fill="#4169E1"/><rect x="709" y="291" width="1" height="15" fill="#00BFFF"/><rect x="708" y="293" width="3" height="12" fill="#00BFFF"/><rect x="709" y="294" width="1" height="10" fill="#4169E1"/><rect x="713" y="284" width="1" height="25" fill="#FF69B4"/><rect x="712" y="295" width="3" height="10" fill="#FF69B4"/><rect x="713" y="296" width="1" height="8" fill="#FFB6C1"/><rect x="717" y="303" width="1" height="30" fill="#FF69B4"/><rect x="716" y="305" width="3" height="19" fill="#FF69B4"/><rect x="717" y="306" width="1" height="17" fill="#FFB6C1"/><rect x="721" y="299" width="1" height="27" fill="#00BFFF"/><rect x="720" y="305" width="3" height="21" fill="#00BFFF"/><rect x="721" y="306" width="1" height="19" fill="#4169E1"/><rect x="725" y="283" width="1" height="23" fill="#00BFFF"/><rect x="724" y="284" width="3" height="21" fill="#00BFFF"/><rect x="725" y="285" width="1" height="19" fill="#4169E1"/><rect x="729" y="266" width="1" height="19" fill="#00BFFF"/><rect x="728" y="270" width="3" height="14" fill="#00BFFF"/><rect x="729" y="271" width="1" height="12" fill="#4169E1"/><rect x="733" y="251" width="1" height="21" fill="#FF69B4"/><rect x="732" y="268" width="3" height="4" fill="#FF69B4"/><rect x="733" y="269" width="1" height="2" fill="#FFB6C1"/><rect x="737" y="267" width="1" height="30" fill="#FF69B4"/><rect x="736" y="267" width="3" height="18" fill="#FF69B4"/><rect x="737" y="268" width="1" height="16" fill="#FFB6C1"/><rect x="741" y="281" width="1" height="19" fill="#FF69B4"/><rect x="740" y="286" width="3" height="14" fill="#FF69B4"/><rect x="741" y="287" width="1" height="12" fill="#FFB6C1"/><rect x="745" y="276" width="1" height="26" fill="#00BFFF"/><rect x="744" y="276" width="3" height="23" fill="#00BFFF"/><rect x="745" y="277" width="1" height="21" fill="#4169E1"/><rect x="749" y="263" width="1" height="23" fill="#00BFFF"/><rect x="748" y="272" width="3" height="7" fill="#00BFFF"/><rect x="749" y="273" width="1" height="5" fill="#4169E1"/><rect x="753" y="263" width="1" height="23" fill="#00BFFF"/><rect x="752" y="271" width="3" height="5" fill="#00BFFF"/><rect x="753" y="272" width="1" height="3" fill="#4169E1"/><rect x="757" y="267" width="1" height="146" fill="#FF69B4"/><rect x="756" y="273" width="3" height="138" fill="#FF69B4"/><rect x="757" y="274" width="1" height="136" fill="#FFB6C1"/><rect x="761" y="371" width="1" height="48" fill="#00BFFF"/><rect x="760" y="375" width="3" height="32" fill="#00BFFF"/><rect x="761" y="376" width="1" height="30" fill="#4169E1"/><rect x="765" y="375" width="1" height="51" fill="#FF69B4"/><rect x="764" y="377" width="3" height="34" fill="#FF69B4"/><rect x="765" y="378" width="1" height="32" fill="#FFB6C1"/><rect x="769" y="393" width="1" height="26" fill="#00BFFF"/><rect x="768" y="409" width="3" height="4" fill="#00BFFF"/><rect x="769" y="410" width="1" height="2" fill="#4169E1"/><rect x="773" y="400" width="1" height="26" fill="#00BFFF"/><rect x="772" y="406" width="3" height="7" fill="#00BFFF"/><rect x="773" y="407" width="1" height="5" fill="#4169E1"/><rect x="777" y="393" width="1" height="26" fill="#00BFFF"/><rect x="776" y="394" width="3" height="19" fill="#00BFFF"/><rect x="777" y="395" width="1" height="17" fill="#4169E1"/><rect x="781" y="393" width="1" height="36" fill="#FF69B4"/><rect x="780" y="396" width="3" height="32" fill="#FF69B4"/><rect x="781" y="397" width="1" height="30" fill="#FFB6C1"/><rect x="785" y="427" width="1" height="30" fill="#FF69B4"/><rect x="784" y="430" width="3" height="25" fill="#FF69B4"/><rect x="785" y="431" width="1" height="23" fill="#FFB6C1"/><rect x="789" y="446" width="1" height="13" fill="#00BFFF"/><rect x="788" y="449" width="3" height="4" fill="#00BFFF"/><rect x="789" y="450" width="1" height="2" fill="#4169E1"/><rect x="793" y="411" width="1" height="42" fill="#00BFFF"/><rect x="792" y="414" width="3" height="38" fill="#00BFFF"/><rect x="793" y="415" width="1" height="36" fill="#4169E1"/><rect x="797" y="414" width="1" height="25" fill="#FF69B4"/><rect x="796" y="415" width="3" height="13" fill="#FF69B4"/><rect x="797" y="416" width="1" height="11" fill="#FFB6C1"/><rect x="801" y="398" width="1" height="30" fill="#00BFFF"/><rect x="800" y="402" width="3" height="24" fill="#00BFFF"/><rect x="801" y="403" width="1" height="22" fill="#4169E1"/><rect x="805" y="383" width="1" height="20" fill="#00BFFF"/><rect x="804" y="385" width="3" height="16" fill="#00BFFF"/><rect x="805" y="386" width="1" height="14" fill="#4169E1"/><rect x="809" y="381" width="1" height="15" fill="#FF69B4"/><rect x="808" y="387" width="3" height="9" fill="#FF69B4"/><rect x="809" y="388" width="1" height="7" fill="#FFB6C1"/><rect x="813" y="395" width="1" height="10" fill="#FF69B4"/><rect x="812" y="396" width="3" height="7" fill="#FF69B4"/><rect x="813" y="397" width="1" height="5" fill="#FFB6C1"/><rect x="817" y="385" width="1" height="18" fill="#00BFFF"/><rect x="816" y="387" width="3" height="14" fill="#00BFFF"/><rect x="817" y="388" width="1" height="12" fill="#4169E1"/><rect x="821" y="373" width="1" height="19" fill="#00BFFF"/><rect x="820" y="383" width="3" height="8" fill="#00BFFF"/><rect x="821" y="384" width="1" height="6" fill="#4169E1"/><rect x="825" y="366" width="1" height="18" fill="#00BFFF"/><rect x="824" y="366" width="3" height="17" fill="#00BFFF"/><rect x="825" y="367" width="1" height="15" fill="#4169E1"/><rect x="829" y="354" width="1" height="13" fill="#00BFFF"/><rect x="828" y="361" width="3" height="5" fill="#00BFFF"/><rect x="829" y="362" width="1" height="3" fill="#4169E1"/><rect x="833" y="360" width="1" height="11" fill="#FF69B4"/><rect x="832" y="362" width="3" height="3" fill="#FF69B4"/><rect x="833" y="363" width="1" height="1" fill="#FFB6C1"/><rect x="837" y="361" width="1" height="10" fill="#00FF00"/><rect x="836" y="364" width="3" height="1" fill="#00FF00"/><rect x="841" y="364" width="1" height="9" fill="#FF69B4"/><rect x="840" y="364" width="3" height="9" fill="#FF69B4"/><rect x="841" y="365" width="1" height="7" fill="#FFB6C1"/><rect x="845" y="364" width="1" height="9" fill="#00FF00"/><rect x="844" y="368" width="3" height="1" fill="#00FF00"/><rect x="849" y="369" width="1" height="8" fill="#00FF00"/><rect x="848" y="372" width="3" height="1" fill="#00FF00"/><rect x="853" y="369" width="1" height="12" fill="#FF69B4"/><rect x="852" y="370" width="3" height="10" fill="#FF69B4"/><rect x="853" y="371" width="1" height="8" fill="#FFB6C1"/><rect x="857" y="377" width="1" height="8" fill="#FF69B4"/><rect x="856" y="379" width="3" height="6" fill="#FF69B4"/><rect x="857" y="380" width="1" height="4" fill="#FFB6C1"/><rect x="861" y="378" width="1" height="11" fill="#00BFFF"/><rect x="860" y="379" width="3" height="4" fill="#00BFFF"/><rect x="861" y="380" width="1" height="2" fill="#4169E1"/><rect x="865" y="376" width="1" height="3" fill="#00BFFF"/><rect x="864" y="376" width="3" height="3" fill="#00BFFF"/><rect x="865" y="377" width="1" height="1" fill="#4169E1"/><rect x="869" y="361" width="1" height="15" fill="#00BFFF"/><rect x="868" y="362" width="3" height="13" fill="#00BFFF"/><rect x="869" y="363" width="1" height="11" fill="#4169E1"/><rect x="873" y="352" width="1" height="11" fill="#00BFFF"/><rect x="872" y="352" width="3" height="10" fill="#00BFFF"/><rect x="873" y="353" width="1" height="8" fill="#4169E1"/><rect x="877" y="352" width="1" height="19" fill="#FF69B4"/><rect x="876" y="354" width="3" height="14" fill="#FF69B4"/><rect x="877" y="355" width="1" height="12" fill="#FFB6C1"/><rect x="881" y="360" width="1" height="11" fill="#FF69B4"/><rect x="880" y="364" width="3" height="7" fill="#FF69B4"/><rect x="881" y="365" width="1" height="5" fill="#FFB6C1"/><line x1="8" y1="327" x2="14" y2="327" stroke="#87CEFA" stroke-width="2"/><line x1="14" y1="327" x2="20" y2="322" stroke="#87CEFA" stroke-width="2"/><line x1="20" y1="322" x2="22" y2="319" stroke="#87CEFA" stroke-width="2"/><line x1="22" y1="319" x2="40" y2="320" stroke="#FF6347" stroke-width="2"/><line x1="40" y1="320" x2="55" y2="322" stroke="#FF6347" stroke-width="2"/><line x1="55" y1="322" x2="60" y2="335" stroke="#FF6347" stroke-width="2"/><line x1="60" y1="335" x2="68" y2="340" stroke="#FF6347" stroke-width="2"/><line x1="68" y1="340" x2="73" y2="340" stroke="#FF6347" stroke-width="2"/><line x1="73" y1="340" x2="80" y2="333" stroke="#87CEFA" stroke-width="2"/><line x1="80" y1="333" x2="86" y2="330" stroke="#87CEFA" stroke-width="2"/><line x1="86" y1="330" x2="94" y2="322.3" stroke="#87CEFA" stroke-width="2"/><line x1="94" y1="322.3" x2="98" y2="317" stroke="#87CEFA" stroke-width="2"/><line x1="98" y1="317" x2="103" y2="312.5" stroke="#87CEFA" stroke-width="2"/><line x1="103" y1="312.5" x2="109.7" y2="309" stroke="#87CEFA" stroke-width="2"/><line x1="109.7" y1="309" x2="116.3" y2="301" stroke="#87CEFA" stroke-width="2"/><line x1="116.3" y1="301" x2="125.6" y2="285.4" stroke="#87CEFA" stroke-width="2"/><line x1="125.6" y1="285.4" x2="129.5" y2="280" stroke="#87CEFA" stroke-width="2"/><line x1="129.5" y1="280" x2="136" y2="275" stroke="#87CEFA" stroke-width="2"/><line x1="136" y1="275" x2="144" y2="273.5" stroke="#87CEFA" stroke-width="2"/><line x1="144" y1="273.5" x2="153" y2="273" stroke="#87CEFA" stroke-width="2"/><line x1="153" y1="273" x2="161" y2="273" stroke="#87CEFA" stroke-width="2"/><line x1="161" y1="273" x2="165" y2="275" stroke="#FF6347" stroke-width="2"/><line x1="165" y1="275" x2="171.8" y2="275.5" stroke="#FF6347" stroke-width="2"/><line x1="171.8" y1="275.5" x2="178" y2="276" stroke="#FF6347" stroke-width="2"/><line x1="178" y1="276" x2="184" y2="274.5" stroke="#87CEFA" stroke-width="2"/><line x1="184" y1="274.5" x2="192" y2="263.3" stroke="#87CEFA" stroke-width="2"/><line x1="192" y1="263.3" x2="197.2" y2="255.3" stroke="#87CEFA" stroke-width="2"/><line x1="197.2" y1="255.3" x2="201" y2="252.7" stroke="#87CEFA" stroke-width="2"/><line x1="201" y1="252.7" x2="214.3" y2="252.7" stroke="#87CEFA" stroke-width="2"/><line x1="214.3" y1="252.7" x2="223.6" y2="253.4" stroke="#FF6347" stroke-width="2"/><line x1="223.6" y1="253.4" x2="230.2" y2="256" stroke="#FF6347" stroke-width="2"/><line x1="230.2" y1="256" x2="236.8" y2="260" stroke="#FF6347" stroke-width="2"/><line x1="236.8" y1="260" x2="242" y2="263.3" stroke="#FF6347" stroke-width="2"/><line x1="242" y1="263.3" x2="247.3" y2="266" stroke="#FF6347" stroke-width="2"/><line x1="247.3" y1="266" x2="257.9" y2="270.5" stroke="#FF6347" stroke-width="2"/><line x1="257.9" y1="270.5" x2="264.5" y2="277.8" stroke="#FF6347" stroke-width="2"/><line x1="264.5" y1="277.8" x2="268.4" y2="277.8" stroke="#FF6347" stroke-width="2"/><line x1="268.4" y1="277.8" x2="276.3" y2="275.8" stroke="#87CEFA" stroke-width="2"/><line x1="276.3" y1="275.8" x2="282" y2="273" stroke="#87CEFA" stroke-width="2"/><line x1="282" y1="273" x2="291.2" y2="266.3" stroke="#87CEFA" stroke-width="2"/><line x1="291.2" y1="266.3" x2="296.5" y2="270.3" stroke="#FF6347" stroke-width="2"/><line x1="296.5" y1="270.3" x2="308.4" y2="295.3" stroke="#FF6347" stroke-width="2"/><line x1="308.4" y1="295.3" x2="310.4" y2="296.6" stroke="#FF6347" stroke-width="2"/><line x1="310.4" y1="296.6" x2="316.3" y2="291.4" stroke="#87CEFA" stroke-width="2"/><line x1="316.3" y1="291.4" x2="321.6" y2="279.5" stroke="#87CEFA" stroke-width="2"/><line x1="321.6" y1="279.5" x2="326.9" y2="267.6" stroke="#87CEFA" stroke-width="2"/><line x1="326.9" y1="267.6" x2="333.5" y2="260.4" stroke="#87CEFA" stroke-width="2"/><line x1="333.5" y1="260.4" x2="340" y2="265" stroke="#FF6347" stroke-width="2"/><line x1="340" y1="265" x2="345.3" y2="273" stroke="#FF6347" stroke-width="2"/><line x1="345.3" y1="273" x2="354.6" y2="288.7" stroke="#FF6347" stroke-width="2"/><line x1="354.6" y1="288.7" x2="361.2" y2="304" stroke="#FF6347" stroke-width="2"/><line x1="361.2" y1="304" x2="367.8" y2="294" stroke="#87CEFA" stroke-width="2"/><line x1="367.8" y1="294" x2="374.3" y2="285.4" stroke="#87CEFA" stroke-width="2"/><line x1="374.3" y1="285.4" x2="377" y2="286" stroke="#FF6347" stroke-width="2"/><line x1="377" y1="286" x2="382" y2="290" stroke="#FF6347" stroke-width="2"/><line x1="382" y1="290" x2="387.2" y2="298.7" stroke="#FF6347" stroke-width="2"/><line x1="387.2" y1="298.7" x2="394.4" y2="308.8" stroke="#FF6347" stroke-width="2"/><line x1="394.4" y1="308.8" x2="401.6" y2="316" stroke="#FF6347" stroke-width="2"/><line x1="401.6" y1="316" x2="407.3" y2="330.4" stroke="#FF6347" stroke-width="2"/><line x1="407.3" y1="330.4" x2="411.7" y2="341.9" stroke="#FF6347" stroke-width="2"/><line x1="411.7" y1="341.9" x2="417.4" y2="350.5" stroke="#FF6347" stroke-width="2"/><line x1="417.4" y1="350.5" x2="423.2" y2="351.2" stroke="#FF6347" stroke-width="2"/><line x1="423.2" y1="351.2" x2="429" y2="354.8" stroke="#FF6347" stroke-width="2"/><line x1="429" y1="354.8" x2="437.6" y2="365" stroke="#FF6347" stroke-width="2"/><line x1="437.6" y1="365" x2="443.3" y2="373.5" stroke="#FF6347" stroke-width="2"/><line x1="443.3" y1="373.5" x2="452" y2="375" stroke="#FF6347" stroke-width="2"/><line x1="452" y1="375" x2="460.6" y2="365" stroke="#87CEFA" stroke-width="2"/><line x1="460.6" y1="365" x2="469.2" y2="356.3" stroke="#87CEFA" stroke-width="2"/><line x1="469.2" y1="356.3" x2="478" y2="350" stroke="#87CEFA" stroke-width="2"/><line x1="478" y1="350" x2="485.2" y2="335.6" stroke="#87CEFA" stroke-width="2"/><line x1="485.2" y1="335.6" x2="492.4" y2="321.2" stroke="#87CEFA" stroke-width="2"/><line x1="492.4" y1="321.2" x2="499.6" y2="308.3" stroke="#87CEFA" stroke-width="2"/><line x1="499.6" y1="308.3" x2="506.8" y2="292.4" stroke="#87CEFA" stroke-width="2"/><line x1="506.8" y1="292.4" x2="514" y2="283.8" stroke="#87CEFA" stroke-width="2"/><line x1="514" y1="283.8" x2="517.6" y2="281" stroke="#87CEFA" stroke-width="2"/><line x1="517.6" y1="281" x2="525.5" y2="288.1" stroke="#FF6347" stroke-width="2"/><line x1="525.5" y1="288.1" x2="534.1" y2="295.3" stroke="#FF6347" stroke-width="2"/><line x1="534.1" y1="295.3" x2="539.9" y2="291" stroke="#87CEFA" stroke-width="2"/><line x1="539.9" y1="291" x2="547" y2="283.8" stroke="#87CEFA" stroke-width="2"/><line x1="547" y1="283.8" x2="554.3" y2="275.2" stroke="#87CEFA" stroke-width="2"/><line x1="554.3" y1="275.2" x2="561.5" y2="263.7" stroke="#87CEFA" stroke-width="2"/><line x1="561.5" y1="263.7" x2="567.7" y2="257.8" stroke="#87CEFA" stroke-width="2"/><line x1="567.7" y1="257.8" x2="572.7" y2="254" stroke="#87CEFA" stroke-width="2"/><line x1="572.7" y1="254" x2="577.7" y2="252.4" stroke="#87CEFA" stroke-width="2"/><line x1="577.7" y1="252.4" x2="582.8" y2="256" stroke="#FF6347" stroke-width="2"/><line x1="582.8" y1="256" x2="591.2" y2="273.3" stroke="#FF6347" stroke-width="2"/><line x1="591.2" y1="273.3" x2="594.5" y2="267" stroke="#87CEFA" stroke-width="2"/><line x1="594.5" y1="267" x2="599.6" y2="246" stroke="#87CEFA" stroke-width="2"/><line x1="599.6" y1="246" x2="603.3" y2="236.7" stroke="#87CEFA" stroke-width="2"/><line x1="603.3" y1="236.7" x2="607.7" y2="222.3" stroke="#87CEFA" stroke-width="2"/><line x1="607.7" y1="222.3" x2="612" y2="212.3" stroke="#87CEFA" stroke-width="2"/><line x1="612" y1="212.3" x2="614.9" y2="210.8" stroke="#87CEFA" stroke-width="2"/><line x1="614.9" y1="210.8" x2="619.2" y2="210.8" stroke="#87CEFA" stroke-width="2"/><line x1="619.2" y1="210.8" x2="623.5" y2="209.4" stroke="#87CEFA" stroke-width="2"/><line x1="623.5" y1="209.4" x2="633.6" y2="197.9" stroke="#87CEFA" stroke-width="2"/><line x1="633.6" y1="197.9" x2="639.3" y2="189.2" stroke="#87CEFA" stroke-width="2"/><line x1="639.3" y1="189.2" x2="645" y2="180.6" stroke="#87CEFA" stroke-width="2"/><line x1="645" y1="180.6" x2="653.7" y2="182" stroke="#FF6347" stroke-width="2"/><line x1="653.7" y1="182" x2="659.5" y2="195" stroke="#FF6347" stroke-width="2"/><line x1="659.5" y1="195" x2="665.2" y2="213.7" stroke="#FF6347" stroke-width="2"/><line x1="665.2" y1="213.7" x2="671" y2="228" stroke="#FF6347" stroke-width="2"/><line x1="671" y1="228" x2="676" y2="239.6" stroke="#FF6347" stroke-width="2"/><line x1="676" y1="239.6" x2="681.2" y2="260.4" stroke="#FF6347" stroke-width="2"/><line x1="681.2" y1="260.4" x2="688.4" y2="283.5" stroke="#FF6347" stroke-width="2"/><line x1="688.4" y1="283.5" x2="694.1" y2="300.7" stroke="#FF6347" stroke-width="2"/><line x1="694.1" y1="300.7" x2="698.5" y2="310.8" stroke="#FF6347" stroke-width="2"/><line x1="698.5" y1="310.8" x2="704.2" y2="315" stroke="#FF6347" stroke-width="2"/><line x1="704.2" y1="315" x2="711.4" y2="310.8" stroke="#87CEFA" stroke-width="2"/><line x1="711.4" y1="310.8" x2="715.7" y2="311.5" stroke="#FF6347" stroke-width="2"/><line x1="715.7" y1="311.5" x2="720" y2="310.8" stroke="#87CEFA" stroke-width="2"/><line x1="720" y1="310.8" x2="725.8" y2="300.7" stroke="#87CEFA" stroke-width="2"/><line x1="725.8" y1="300.7" x2="731.6" y2="289.2" stroke="#87CEFA" stroke-width="2"/><line x1="731.6" y1="289.2" x2="737.3" y2="282" stroke="#87CEFA" stroke-width="2"/><line x1="737.3" y1="282" x2="741.6" y2="281.3" stroke="#87CEFA" stroke-width="2"/><line x1="741.6" y1="281.3" x2="745.9" y2="277.7" stroke="#87CEFA" stroke-width="2"/><line x1="745.9" y1="277.7" x2="753.1" y2="273.4" stroke="#87CEFA" stroke-width="2"/><line x1="753.1" y1="273.4" x2="757.5" y2="273.4" stroke="#87CEFA" stroke-width="2"/><line x1="757.5" y1="273.4" x2="760" y2="290" stroke="#FF6347" stroke-width="2"/><line x1="760" y1="290" x2="763" y2="320" stroke="#FF6347" stroke-width="2"/><line x1="763" y1="320" x2="768.9" y2="371.4" stroke="#FF6347" stroke-width="2"/><line x1="768.9" y1="371.4" x2="776.5" y2="406" stroke="#FF6347" stroke-width="2"/><line x1="776.5" y1="406" x2="784.2" y2="429" stroke="#FF6347" stroke-width="2"/><line x1="784.2" y1="429" x2="790" y2="444.4" stroke="#FF6347" stroke-width="2"/><line x1="790" y1="444.4" x2="797.7" y2="442.4" stroke="#87CEFA" stroke-width="2"/><line x1="797.7" y1="442.4" x2="803.4" y2="427" stroke="#87CEFA" stroke-width="2"/><line x1="803.4" y1="427" x2="809.2" y2="409.8" stroke="#87CEFA" stroke-width="2"/><line x1="809.2" y1="409.8" x2="815" y2="396.4" stroke="#87CEFA" stroke-width="2"/><line x1="815" y1="396.4" x2="822.6" y2="381" stroke="#87CEFA" stroke-width="2"/><line x1="822.6" y1="381" x2="828.4" y2="367.6" stroke="#87CEFA" stroke-width="2"/><line x1="828.4" y1="367.6" x2="835.8" y2="360.5" stroke="#87CEFA" stroke-width="2"/><line x1="835.8" y1="360.5" x2="840" y2="359.4" stroke="#87CEFA" stroke-width="2"/><line x1="840" y1="359.4" x2="845.5" y2="361.6" stroke="#FF6347" stroke-width="2"/><line x1="845.5" y1="361.6" x2="850.9" y2="366.4" stroke="#FF6347" stroke-width="2"/><line x1="850.9" y1="366.4" x2="855.2" y2="372.9" stroke="#FF6347" stroke-width="2"/><line x1="855.2" y1="372.9" x2="859.5" y2="378.9" stroke="#FF6347" stroke-width="2"/><line x1="859.5" y1="378.9" x2="864.9" y2="381.6" stroke="#FF6347" stroke-width="2"/><line x1="864.9" y1="381.6" x2="870.3" y2="377.2" stroke="#87CEFA" stroke-width="2"/><line x1="870.3" y1="377.2" x2="874.6" y2="370.8" stroke="#87CEFA" stroke-width="2"/><line x1="874.6" y1="370.8" x2="880" y2="366.4" stroke="#87CEFA" stroke-width="2"/></g><rect x="108" y="194" width="10" height="10" fill="#FFFFFF"/><g clip-path="url(#ci)"><path d="M7 486h3v3h-3zM11 486h3v3h-3zM15 486h3v3h-3zM19 486h3v3h-3zM23 486h3v3h-3zM27 486h3v3h-3zM31 486h3v3h-3zM35 486h3v3h-3zM39 486h3v3h-3zM43 486h3v3h-3z" fill="#00BFFF"/><path d="M47 486h3v3h-3z" fill="#FF0000"/><path d="M51 486h3v3h-3zM55 486h3v3h-3z" fill="#00BFFF"/><path d="M59 486h3v3h-3zM63 486h3v3h-3zM67 486h3v3h-3zM71 486h3v3h-3z" fill="#FF0000"/><path d="M75 486h3v3h-3zM79 486h3v3h-3zM83 486h3v3h-3zM87 486h3v3h-3zM91 486h3v3h-3zM95 486h3v3h-3zM99 486h3v3h-3zM103 486h3v3h-3zM107 486h3v3h-3zM111 486h3v3h-3zM115 486h3v3h-3zM119 486h3v3h-3zM123 486h3v3h-3zM127 486h3v3h-3zM131 486h3v3h-3zM135 486h3v3h-3zM139 486h3v3h-3zM143 486h3v3h-3zM147 486h3v3h-3zM151 486h3v3h-3zM155 486h3v3h-3zM159 486h3v3h-3zM163 486h3v3h-3zM167 486h3v3h-3zM171 486h3v3h-3zM175 486h3v3h-3zM179 486h3v3h-3zM183 486h3v3h-3zM187 486h3v3h-3zM191 486h3v3h-3zM195 486h3v3h-3zM199 486h3v3h-3zM203 486h3v3h-3zM207 486h3v3h-3zM211 486h3v3h-3zM215 486h3v3h-3zM219 486h3v3h-3zM223 486h3v3h-3zM227 486h3v3h-3z" fill="#00BFFF"/><path d="M231 486h3v3h-3zM235 486h3v3h-3zM239 486h3v3h-3zM243 486h3v3h-3zM247 486h3v3h-3zM251 486h3v3h-3zM255 486h3v3h-3zM259 486h3v3h-3zM263 486h3v3h-3zM267 486h3v3h-3z" fill="#FF0000"/><path d="M271 486h3v3h-3z" fill="#00BFFF"/><path d="M275 486h3v3h-3zM279 486h3v3h-3z" fill="#FF0000"/><path d="M283 486h3v3h-3zM287 486h3v3h-3zM291 486h3v3h-3z" fill="#00BFFF"/><path d="M295 486h3v3h-3zM299 486h3v3h-3zM303 486h3v3h-3zM307 486h3v3h-3zM311 486h3v3h-3z" fill="#FF0000"/><path d="M315 486h3v3h-3zM319 486h3v3h-3zM323 486h3v3h-3zM327 486h3v3h-3zM331 486h3v3h-3z" fill="#00BFFF"/><path d="M335 486h3v3h-3zM339 486h3v3h-3zM343 486h3v3h-3zM347 486h3v3h-3zM351 486h3v3h-3zM355 486h3v3h-3zM359 486h3v3h-3z" fill="#FF0000"/><path d="M363 486h3v3h-3zM367 486h3v3h-3zM371 486h3v3h-3z" fill="#00BFFF"/><path d="M375 486h3v3h-3zM379 486h3v3h-3zM383 486h3v3h-3zM387 486h3v3h-3zM391 486h3v3h-3zM395 486h3v3h-3zM399 486h3v3h-3zM403 486h3v3h-3zM407 486h3v3h-3zM411 486h3v3h-3zM415 486h3v3h-3zM419 486h3v3h-3zM423 486h3v3h-3zM427 486h3v3h-3zM431 486h3v3h-3zM435 486h3v3h-3zM439 486h3v3h-3zM443 486h3v3h-3zM447 486h3v3h-3zM451 486h3v3h-3z" fill="#FF0000"/><path d="M455 486h3v3h-3zM459 486h3v3h-3zM463 486h3v3h-3zM467 486h3v3h-3z" fill="#00BFFF"/><path d="M471 486h3v3h-3zM475 486h3v3h-3z" fill="#FF0000"/><path d="M479 486h3v3h-3zM483 486h3v3h-3zM487 486h3v3h-3zM491 486h3v3h-3zM495 486h3v3h-3zM499 486h3v3h-3zM503 486h3v3h-3zM507 486h3v3h-3zM511 486h3v3h-3zM515 486h3v3h-3zM519 486h3v3h-3zM523 486h3v3h-3zM527 486h3v3h-3zM531 486h3v3h-3zM535 486h3v3h-3zM539 486h3v3h-3zM543 486h3v3h-3zM547 486h3v3h-3zM551 486h3v3h-3zM555 486h3v3h-3zM559 486h3v3h-3zM563 486h3v3h-3zM567 486h3v3h-3zM571 486h3v3h-3zM575 486h3v3h-3zM579 486h3v3h-3z" fill="#00BFFF"/><path d="M583 486h3v3h-3zM587 486h3v3h-3zM591 486h3v3h-3z" fill="#FF0000"/><path d="M595 486h3v3h-3zM599 486h3v3h-3zM603 486h3v3h-3zM607 486h3v3h-3zM611 486h3v3h-3zM615 486h3v3h-3zM619 486h3v3h-3zM623 486h3v3h-3zM627 486h3v3h-3zM631 486h3v3h-3zM635 486h3v3h-3zM639 486h3v3h-3zM643 486h3v3h-3zM647 486h3v3h-3zM651 486h3v3h-3z" fill="#00BFFF"/><path d="M655 486h3v3h-3zM659 486h3v3h-3zM663 486h3v3h-3zM667 486h3v3h-3zM671 486h3v3h-3zM675 486h3v3h-3zM679 486h3v3h-3zM683 486h3v3h-3zM687 486h3v3h-3zM691 486h3v3h-3zM695 486h3v3h-3zM699 486h3v3h-3zM703 486h3v3h-3zM707 486h3v3h-3zM711 486h3v3h-3zM715 486h3v3h-3zM719 486h3v3h-3zM723 486h3v3h-3z" fill="#FF0000"/><path d="M727 486h3v3h-3zM731 486h3v3h-3zM735 486h3v3h-3z" fill="#00BFFF"/><path d="M739 486h3v3h-3zM743 486h3v3h-3z" fill="#FF0000"/><path d="M747 486h3v3h-3zM751 486h3v3h-3z" fill="#00BFFF"/><path d="M755 486h3v3h-3zM759 486h3v3h-3zM763 486h3v3h-3zM767 486h3v3h-3zM771 486h3v3h-3zM775 486h3v3h-3zM779 486h3v3h-3zM783 486h3v3h-3zM787 486h3v3h-3zM791 486h3v3h-3zM795 486h3v3h-3zM799 486h3v3h-3z" fill="#FF0000"/><path d="M803 486h3v3h-3zM807 486h3v3h-3z" fill="#00BFFF"/><path d="M811 486h3v3h-3z" fill="#FF0000"/><path d="M815 486h3v3h-3zM819 486h3v3h-3zM823 486h3v3h-3zM827 486h3v3h-3zM831 486h3v3h-3zM835 486h3v3h-3zM839 486h3v3h-3zM843 486h3v3h-3zM847 486h3v3h-3zM851 486h3v3h-3z" fill="#00BFFF"/><path d="M855 486h3v3h-3zM859 486h3v3h-3z" fill="#FF0000"/><path d="M863 486h3v3h-3zM867 486h3v3h-3zM871 486h3v3h-3zM875 486h3v3h-3zM879 486h3v3h-3z" fill="#00BFFF"/><path d="M7 502h3v3h-3zM11 502h3v3h-3zM15 502h3v3h-3zM19 502h3v3h-3zM23 502h3v3h-3zM27 502h3v3h-3zM31 502h3v3h-3zM35 502h3v3h-3zM39 502h3v3h-3zM43 502h3v3h-3zM47 502h3v3h-3zM51 502h3v3h-3zM55 502h3v3h-3z" fill="#00BFFF"/><path d="M59 502h3v3h-3zM63 502h3v3h-3zM67 502h3v3h-3zM71 502h3v3h-3z" fill="#FF0000"/><path d="M75 502h3v3h-3zM79 502h3v3h-3zM83 502h3v3h-3zM87 502h3v3h-3zM91 502h3v3h-3zM95 502h3v3h-3zM99 502h3v3h-3zM103 502h3v3h-3zM107 502h3v3h-3zM111 502h3v3h-3zM115 502h3v3h-3zM119 502h3v3h-3zM123 502h3v3h-3zM127 502h3v3h-3zM131 502h3v3h-3zM135 502h3v3h-3zM139 502h3v3h-3zM143 502h3v3h-3zM147 502h3v3h-3zM151 502h3v3h-3zM155 502h3v3h-3zM159 502h3v3h-3zM163 502h3v3h-3zM167 502h3v3h-3zM171 502h3v3h-3zM175 502h3v3h-3zM179 502h3v3h-3zM183 502h3v3h-3zM187 502h3v3h-3zM191 502h3v3h-3zM195 502h3v3h-3zM199 502h3v3h-3zM203 502h3v3h-3zM207 502h3v3h-3zM211 502h3v3h-3zM215 502h3v3h-3zM219 502h3v3h-3zM223 502h3v3h-3zM227 502h3v3h-3zM231 502h3v3h-3zM235 502h3v3h-3zM239 502h3v3h-3zM243 502h3v3h-3zM247 502h3v3h-3z" fill="#00BFFF"/><path d="M251 502h3v3h-3z" fill="#FF0000"/><path d="M255 502h3v3h-3z" fill="#00BFFF"/><path d="M259 502h3v3h-3zM263 502h3v3h-3zM267 502h3v3h-3z" fill="#FF0000"/><path d="M271 502h3v3h-3zM275 502h3v3h-3zM279 502h3v3h-3zM283 502h3v3h-3zM287 502h3v3h-3zM291 502h3v3h-3z" fill="#00BFFF"/><path d="M295 502h3v3h-3zM299 502h3v3h-3zM303 502h3v3h-3zM307 502h3v3h-3zM311 502h3v3h-3z" fill="#FF0000"/><path d="M315 502h3v3h-3zM319 502h3v3h-3zM323 502h3v3h-3zM327 502h3v3h-3zM331 502h3v3h-3z" fill="#00BFFF"/><path d="M335 502h3v3h-3zM339 502h3v3h-3zM343 502h3v3h-3zM347 502h3v3h-3zM351 502h3v3h-3zM355 502h3v3h-3zM359 502h3v3h-3z" fill="#FF0000"/><path d="M363 502h3v3h-3zM367 502h3v3h-3zM371 502h3v3h-3z" fill="#00BFFF"/><path d="M375 502h3v3h-3zM379 502h3v3h-3zM383 502h3v3h-3zM387 502h3v3h-3zM391 502h3v3h-3zM395 502h3v3h-3zM399 502h3v3h-3zM403 502h3v3h-3zM407 502h3v3h-3zM411 502h3v3h-3zM415 502h3v3h-3zM419 502h3v3h-3zM423 502h3v3h-3zM427 502h3v3h-3zM431 502h3v3h-3zM435 502h3v3h-3zM439 502h3v3h-3zM443 502h3v3h-3zM447 502h3v3h-3zM451 502h3v3h-3zM455 502h3v3h-3zM459 502h3v3h-3zM463 502h3v3h-3zM467 502h3v3h-3zM471 502h3v3h-3zM475 502h3v3h-3zM479 502h3v3h-3zM483 502h3v3h-3z" fill="#FF0000"/><path d="M487 502h3v3h-3zM491 502h3v3h-3zM495 502h3v3h-3zM499 502h3v3h-3zM503 502h3v3h-3zM507 502h3v3h-3zM511 502h3v3h-3zM515 502h3v3h-3zM519 502h3v3h-3zM523 502h3v3h-3zM527 502h3v3h-3zM531 502h3v3h-3zM535 502h3v3h-3zM539 502h3v3h-3zM543 502h3v3h-3zM547 502h3v3h-3zM551 502h3v3h-3zM555 502h3v3h-3zM559 502h3v3h-3zM563 502h3v3h-3zM567 502h3v3h-3zM571 502h3v3h-3zM575 502h3v3h-3zM579 502h3v3h-3zM583 502h3v3h-3zM587 502h3v3h-3zM591 502h3v3h-3zM595 502h3v3h-3zM599 502h3v3h-3zM603 502h3v3h-3zM607 502h3v3h-3zM611 502h3v3h-3zM615 502h3v3h-3zM619 502h3v3h-3zM623 502h3v3h-3zM627 502h3v3h-3zM631 502h3v3h-3zM635 502h3v3h-3zM639 502h3v3h-3zM643 502h3v3h-3zM647 502h3v3h-3zM651 502h3v3h-3zM655 502h3v3h-3zM659 502h3v3h-3zM663 502h3v3h-3z" fill="#00BFFF"/><path d="M667 502h3v3h-3zM671 502h3v3h-3zM675 502h3v3h-3zM679 502h3v3h-3zM683 502h3v3h-3zM687 502h3v3h-3zM691 502h3v3h-3zM695 502h3v3h-3zM699 502h3v3h-3zM703 502h3v3h-3zM707 502h3v3h-3zM711 502h3v3h-3zM715 502h3v3h-3zM719 502h3v3h-3zM723 502h3v3h-3zM727 502h3v3h-3z" fill="#FF0000"/><path d="M731 502h3v3h-3z" fill="#00BFFF"/><path d="M735 502h3v3h-3zM739 502h3v3h-3zM743 502h3v3h-3zM747 502h3v3h-3zM751 502h3v3h-3zM755 502h3v3h-3zM759 502h3v3h-3zM763 502h3v3h-3zM767 502h3v3h-3zM771 502h3v3h-3zM775 502h3v3h-3zM779 502h3v3h-3zM783 502h3v3h-3zM787 502h3v3h-3zM791 502h3v3h-3zM795 502h3v3h-3zM799 502h3v3h-3zM803 502h3v3h-3zM807 502h3v3h-3zM811 502h3v3h-3zM815 502h3v3h-3zM819 502h3v3h-3zM823 502h3v3h-3zM827 502h3v3h-3zM831 502h3v3h-3zM835 502h3v3h-3zM839 502h3v3h-3zM843 502h3v3h-3zM847 502h3v3h-3zM851 502h3v3h-3zM855 502h3v3h-3zM859 502h3v3h-3zM863 502h3v3h-3zM867 502h3v3h-3z" fill="#FF0000"/><path d="M871 502h3v3h-3zM875 502h3v3h-3z" fill="#00BFFF"/><path d="M879 502h3v3h-3z" fill="#FF0000"/><path d="M7 519h3v3h-3zM11 519h3v3h-3zM15 519h3v3h-3zM19 519h3v3h-3zM23 519h3v3h-3zM27 519h3v3h-3zM31 519h3v3h-3zM35 519h3v3h-3z" fill="#FF0000"/><path d="M39 519h3v3h-3z" fill="#00BFFF"/><path d="M43 519h3v3h-3zM47 519h3v3h-3zM51 519h3v3h-3zM55 519h3v3h-3zM59 519h3v3h-3zM63 519h3v3h-3zM67 519h3v3h-3zM71 519h3v3h-3zM75 519h3v3h-3zM79 519h3v3h-3zM83 519h3v3h-3z" fill="#FF0000"/><path d="M87 519h3v3h-3zM91 519h3v3h-3zM95 519h3v3h-3zM99 519h3v3h-3zM103 519h3v3h-3zM107 519h3v3h-3zM111 519h3v3h-3zM115 519h3v3h-3zM119 519h3v3h-3zM123 519h3v3h-3zM127 519h3v3h-3zM131 519h3v3h-3zM135 519h3v3h-3zM139 519h3v3h-3zM143 519h3v3h-3zM147 519h3v3h-3zM151 519h3v3h-3zM155 519h3v3h-3zM159 519h3v3h-3zM163 519h3v3h-3zM167 519h3v3h-3zM171 519h3v3h-3zM175 519h3v3h-3zM179 519h3v3h-3zM183 519h3v3h-3zM187 519h3v3h-3zM191 519h3v3h-3zM195 519h3v3h-3zM199 519h3v3h-3zM203 519h3v3h-3zM207 519h3v3h-3zM211 519h3v3h-3zM215 519h3v3h-3zM219 519h3v3h-3zM223 519h3v3h-3zM227 519h3v3h-3zM231 519h3v3h-3zM235 519h3v3h-3zM239 519h3v3h-3zM243 519h3v3h-3zM247 519h3v3h-3zM251 519h3v3h-3zM255 519h3v3h-3zM259 519h3v3h-3z" fill="#00BFFF"/><path d="M263 519h3v3h-3z" fill="#FF0000"/><path d="M267 519h3v3h-3zM271 519h3v3h-3zM275 519h3v3h-3zM279 519h3v3h-3zM283 519h3v3h-3zM287 519h3v3h-3zM291 519h3v3h-3z" fill="#00BFFF"/><path d="M295 519h3v3h-3zM299 519h3v3h-3zM303 519h3v3h-3zM307 519h3v3h-3zM311 519h3v3h-3z" fill="#FF0000"/><path d="M315 519h3v3h-3zM319 519h3v3h-3zM323 519h3v3h-3zM327 519h3v3h-3zM331 519h3v3h-3zM335 519h3v3h-3z" fill="#00BFFF"/><path d="M339 519h3v3h-3zM343 519h3v3h-3zM347 519h3v3h-3zM351 519h3v3h-3zM355 519h3v3h-3zM359 519h3v3h-3z" fill="#FF0000"/><path d="M363 519h3v3h-3zM367 519h3v3h-3zM371 519h3v3h-3z" fill="#00BFFF"/><path d="M375 519h3v3h-3zM379 519h3v3h-3zM383 519h3v3h-3zM387 519h3v3h-3zM391 519h3v3h-3zM395 519h3v3h-3zM399 519h3v3h-3zM403 519h3v3h-3zM407 519h3v3h-3zM411 519h3v3h-3zM415 519h3v3h-3zM419 519h3v3h-3zM423 519h3v3h-3zM427 519h3v3h-3zM431 519h3v3h-3zM435 519h3v3h-3zM439 519h3v3h-3zM443 519h3v3h-3zM447 519h3v3h-3zM451 519h3v3h-3zM455 519h3v3h-3zM459 519h3v3h-3zM463 519h3v3h-3zM467 519h3v3h-3zM471 519h3v3h-3zM475 519h3v3h-3zM479 519h3v3h-3zM483 519h3v3h-3z" fill="#FF0000"/><path d="M487 519h3v3h-3zM491 519h3v3h-3zM495 519h3v3h-3zM499 519h3v3h-3zM503 519h3v3h-3zM507 519h3v3h-3zM511 519h3v3h-3zM515 519h3v3h-3zM519 519h3v3h-3zM523 519h3v3h-3zM527 519h3v3h-3zM531 519h3v3h-3zM535 519h3v3h-3zM539 519h3v3h-3zM543 519h3v3h-3zM547 519h3v3h-3zM551 519h3v3h-3zM555 519h3v3h-3zM559 519h3v3h-3zM563 519h3v3h-3zM567 519h3v3h-3zM571 519h3v3h-3zM575 519h3v3h-3zM579 519h3v3h-3zM583 519h3v3h-3zM587 519h3v3h-3zM591 519h3v3h-3zM595 519h3v3h-3zM599 519h3v3h-3zM603 519h3v3h-3zM607 519h3v3h-3zM611 519h3v3h-3zM615 519h3v3h-3zM619 519h3v3h-3zM623 519h3v3h-3zM627 519h3v3h-3zM631 519h3v3h-3zM635 519h3v3h-3zM639 519h3v3h-3zM643 519h3v3h-3zM647 519h3v3h-3zM651 519h3v3h-3zM655 519h3v3h-3zM659 519h3v3h-3zM663 519h3v3h-3zM667 519h3v3h-3zM671 519h3v3h-3z" fill="#00BFFF"/><path d="M675 519h3v3h-3zM679 519h3v3h-3zM683 519h3v3h-3zM687 519h3v3h-3zM691 519h3v3h-3zM695 519h3v3h-3zM699 519h3v3h-3zM703 519h3v3h-3zM707 519h3v3h-3zM711 519h3v3h-3zM715 519h3v3h-3zM719 519h3v3h-3zM723 519h3v3h-3zM727 519h3v3h-3z" fill="#FF0000"/><path d="M731 519h3v3h-3z" fill="#00BFFF"/><path d="M735 519h3v3h-3zM739 519h3v3h-3zM743 519h3v3h-3zM747 519h3v3h-3zM751 519h3v3h-3zM755 519h3v3h-3zM759 519h3v3h-3zM763 519h3v3h-3zM767 519h3v3h-3zM771 519h3v3h-3zM775 519h3v3h-3zM779 519h3v3h-3zM783 519h3v3h-3zM787 519h3v3h-3zM791 519h3v3h-3zM795 519h3v3h-3zM799 519h3v3h-3zM803 519h3v3h-3zM807 519h3v3h-3zM811 519h3v3h-3zM815 519h3v3h-3zM819 519h3v3h-3zM823 519h3v3h-3zM827 519h3v3h-3zM831 519h3v3h-3zM835 519h3v3h-3zM839 519h3v3h-3zM843 519h3v3h-3zM847 519h3v3h-3zM851 519h3v3h-3zM855 519h3v3h-3zM859 519h3v3h-3zM863 519h3v3h-3zM867 519h3v3h-3zM871 519h3v3h-3zM875 519h3v3h-3zM879 519h3v3h-3z" fill="#FF0000"/><path d="M7 535h3v3h-3zM11 535h3v3h-3zM15 535h3v3h-3zM19 535h3v3h-3zM23 535h3v3h-3zM27 535h3v3h-3zM31 535h3v3h-3zM35 535h3v3h-3zM39 535h3v3h-3zM43 535h3v3h-3zM47 535h3v3h-3zM51 535h3v3h-3zM55 535h3v3h-3zM59 535h3v3h-3zM63 535h3v3h-3zM67 535h3v3h-3zM71 535h3v3h-3zM75 535h3v3h-3zM79 535h3v3h-3zM83 535h3v3h-3zM87 535h3v3h-3zM91 535h3v3h-3zM95 535h3v3h-3zM99 535h3v3h-3zM103 535h3v3h-3zM107 535h3v3h-3z" fill="#FF0000"/><path d="M111 535h3v3h-3zM115 535h3v3h-3zM119 535h3v3h-3zM123 535h3v3h-3zM127 535h3v3h-3zM131 535h3v3h-3zM135 535h3v3h-3zM139 535h3v3h-3zM143 535h3v3h-3zM147 535h3v3h-3zM151 535h3v3h-3zM155 535h3v3h-3zM159 535h3v3h-3zM163 535h3v3h-3zM167 535h3v3h-3zM171 535h3v3h-3zM175 535h3v3h-3zM179 535h3v3h-3zM183 535h3v3h-3zM187 535h3v3h-3zM191 535h3v3h-3zM195 535h3v3h-3zM199 535h3v3h-3zM203 535h3v3h-3zM207 535h3v3h-3zM211 535h3v3h-3zM215 535h3v3h-3zM219 535h3v3h-3zM223 535h3v3h-3zM227 535h3v3h-3zM231 535h3v3h-3zM235 535h3v3h-3zM239 535h3v3h-3zM243 535h3v3h-3zM247 535h3v3h-3zM251 535h3v3h-3zM255 535h3v3h-3zM259 535h3v3h-3z" fill="#00BFFF"/><path d="M263 535h3v3h-3z" fill="#FF0000"/><path d="M267 535h3v3h-3zM271 535h3v3h-3zM275 535h3v3h-3zM279 535h3v3h-3zM283 535h3v3h-3zM287 535h3v3h-3zM291 535h3v3h-3z" fill="#00BFFF"/><path d="M295 535h3v3h-3zM299 535h3v3h-3zM303 535h3v3h-3zM307 535h3v3h-3zM311 535h3v3h-3z" fill="#FF0000"/><path d="M315 535h3v3h-3zM319 535h3v3h-3zM323 535h3v3h-3zM327 535h3v3h-3zM331 535h3v3h-3zM335 535h3v3h-3zM339 535h3v3h-3z" fill="#00BFFF"/><path d="M343 535h3v3h-3zM347 535h3v3h-3zM351 535h3v3h-3zM355 535h3v3h-3zM359 535h3v3h-3z" fill="#FF0000"/><path d="M363 535h3v3h-3zM367 535h3v3h-3zM371 535h3v3h-3z" fill="#00BFFF"/><path d="M375 535h3v3h-3zM379 535h3v3h-3zM383 535h3v3h-3zM387 535h3v3h-3zM391 535h3v3h-3zM395 535h3v3h-3zM399 535h3v3h-3zM403 535h3v3h-3zM407 535h3v3h-3zM411 535h3v3h-3zM415 535h3v3h-3zM419 535h3v3h-3zM423 535h3v3h-3zM427 535h3v3h-3zM431 535h3v3h-3zM435 535h3v3h-3zM439 535h3v3h-3zM443 535h3v3h-3zM447 535h3v3h-3zM451 535h3v3h-3zM455 535h3v3h-3zM459 535h3v3h-3zM463 535h3v3h-3zM467 535h3v3h-3zM471 535h3v3h-3zM475 535h3v3h-3zM479 535h3v3h-3zM483 535h3v3h-3zM487 535h3v3h-3z" fill="#FF0000"/><path d="M491 535h3v3h-3zM495 535h3v3h-3zM499 535h3v3h-3zM503 535h3v3h-3zM507 535h3v3h-3zM511 535h3v3h-3zM515 535h3v3h-3zM519 535h3v3h-3zM523 535h3v3h-3zM527 535h3v3h-3zM531 535h3v3h-3zM535 535h3v3h-3zM539 535h3v3h-3zM543 535h3v3h-3zM547 535h3v3h-3zM551 535h3v3h-3zM555 535h3v3h-3zM559 535h3v3h-3zM563 535h3v3h-3zM567 535h3v3h-3zM571 535h3v3h-3zM575 535h3v3h-3zM579 535h3v3h-3zM583 535h3v3h-3zM587 535h3v3h-3zM591 535h3v3h-3zM595 535h3v3h-3zM599 535h3v3h-3zM603 535h3v3h-3zM607 535h3v3h-3zM611 535h3v3h-3zM615 535h3v3h-3zM619 535h3v3h-3zM623 535h3v3h-3zM627 535h3v3h-3zM631 535h3v3h-3zM635 535h3v3h-3zM639 535h3v3h-3zM643 535h3v3h-3zM647 535h3v3h-3zM651 535h3v3h-3zM655 535h3v3h-3zM659 535h3v3h-3zM663 535h3v3h-3zM667 535h3v3h-3zM671 535h3v3h-3zM675 535h3v3h-3zM679 535h3v3h-3z" fill="#00BFFF"/><path d="M683 535h3v3h-3zM687 535h3v3h-3zM691 535h3v3h-3zM695 535h3v3h-3zM699 535h3v3h-3zM703 535h3v3h-3zM707 535h3v3h-3zM711 535h3v3h-3zM715 535h3v3h-3zM719 535h3v3h-3zM723 535h3v3h-3zM727 535h3v3h-3z" fill="#FF0000"/><path d="M731 535h3v3h-3z" fill="#00BFFF"/><path d="M735 535h3v3h-3zM739 535h3v3h-3zM743 535h3v3h-3zM747 535h3v3h-3zM751 535h3v3h-3zM755 535h3v3h-3zM759 535h3v3h-3zM763 535h3v3h-3zM767 535h3v3h-3zM771 535h3v3h-3zM775 535h3v3h-3zM779 535h3v3h-3zM783 535h3v3h-3zM787 535h3v3h-3zM791 535h3v3h-3zM795 535h3v3h-3zM799 535h3v3h-3zM803 535h3v3h-3zM807 535h3v3h-3zM811 535h3v3h-3zM815 535h3v3h-3zM819 535h3v3h-3zM823 535h3v3h-3zM827 535h3v3h-3zM831 535h3v3h-3zM835 535h3v3h-3zM839 535h3v3h-3zM843 535h3v3h-3zM847 535h3v3h-3zM851 535h3v3h-3zM855 535h3v3h-3zM859 535h3v3h-3zM863 535h3v3h-3zM867 535h3v3h-3zM871 535h3v3h-3zM875 535h3v3h-3zM879 535h3v3h-3z" fill="#FF0000"/></g><g clip-path="url(#ca)"><path d="M21 580h1v8h-1zM25 579h1v9h-1zM29 579h1v9h-1zM81 588h1v1h-1zM85 588h1v1h-1zM89 587h1v1h-1zM93 585h1v3h-1zM97 584h1v4h-1zM101 584h1v4h-1zM105 583h1v5h-1zM109 583h1v5h-1zM113 581h1v7h-1zM117 579h1v9h-1zM121 578h1v10h-1zM125 576h1v12h-1zM129 574h1v14h-1zM133 572h1v16h-1zM145 573h1v15h-1zM157 574h1v14h-1zM185 578h1v10h-1zM189 576h1v12h-1zM193 576h1v12h-1zM197 574h1v14h-1zM201 573h1v15h-1zM273 588h1v3h-1zM281 588h1v2h-1zM285 588h1v1h-1zM317 588h1v8h-1zM321 588h1v6h-1zM325 588h1v1h-1zM329 586h1v2h-1zM333 585h1v3h-1zM365 588h1v8h-1zM369 588h1v6h-1zM373 588h1v4h-1zM377 588h1v1h-1zM381 588h1v1h-1zM425 588h1v20h-1zM429 588h1v18h-1zM433 588h1v18h-1zM453 588h1v24h-1zM457 588h1v20h-1zM461 588h1v17h-1zM465 588h1v13h-1zM469 588h1v10h-1zM473 588h1v8h-1zM481 588h1v6h-1zM485 588h1v5h-1zM489 588h1v1h-1zM493 586h1v2h-1zM497 583h1v5h-1zM501 580h1v8h-1zM505 575h1v13h-1zM509 572h1v16h-1zM513 570h1v18h-1zM517 568h1v20h-1zM521 568h1v20h-1zM541 573h1v15h-1zM545 573h1v15h-1zM549 572h1v16h-1zM553 571h1v17h-1zM557 569h1v19h-1zM561 568h1v20h-1zM565 567h1v21h-1zM573 567h1v21h-1zM601 576h1v12h-1zM605 571h1v17h-1zM609 566h1v22h-1zM613 563h1v25h-1zM637 566h1v22h-1zM641 564h1v24h-1zM645 562h1v26h-1zM653 562h1v26h-1zM709 588h1v26h-1zM713 588h1v25h-1zM725 588h1v24h-1zM729 588h1v22h-1zM733 588h1v19h-1zM737 588h1v15h-1zM741 588h1v12h-1zM745 588h1v10h-1zM749 588h1v9h-1zM781 588h1v45h-1zM793 588h1v44h-1zM797 588h1v44h-1zM801 588h1v43h-1zM805 588h1v36h-1zM809 588h1v30h-1zM813 588h1v25h-1zM817 588h1v21h-1zM821 588h1v17h-1zM825 588h1v15h-1zM829 588h1v12h-1zM833 588h1v8h-1zM837 588h1v5h-1zM841 588h1v3h-1zM845 588h1v2h-1zM865 588h1v2h-1zM873 586h1v2h-1zM877 584h1v4h-1zM881 582h1v6h-1z" fill="#008000"/><path d="M9 580h1v8h-1zM13 580h1v8h-1zM17 580h1v8h-1zM33 579h1v9h-1zM37 579h1v9h-1zM41 580h1v8h-1zM45 580h1v8h-1zM49 581h1v7h-1zM53 582h1v6h-1zM57 582h1v6h-1zM61 584h1v4h-1zM65 586h1v2h-1zM73 588h1v1h-1zM77 588h1v2h-1zM137 572h1v16h-1zM141 573h1v15h-1zM149 574h1v14h-1zM153 574h1v14h-1zM161 574h1v14h-1zM165 576h1v12h-1zM169 576h1v12h-1zM173 576h1v12h-1zM177 578h1v10h-1zM181 578h1v10h-1zM205 574h1v14h-1zM209 576h1v12h-1zM213 576h1v12h-1zM217 578h1v10h-1zM221 578h1v10h-1zM225 579h1v9h-1zM229 580h1v8h-1zM233 581h1v7h-1zM237 583h1v5h-1zM241 584h1v4h-1zM245 586h1v2h-1zM249 586h1v2h-1zM253 587h1v1h-1zM261 588h1v1h-1zM265 588h1v3h-1zM269 588h1v3h-1zM277 588h1v3h-1zM297 588h1v1h-1zM301 588h1v3h-1zM305 588h1v6h-1zM309 588h1v8h-1zM313 588h1v10h-1zM337 585h1v3h-1zM341 586h1v2h-1zM349 588h1v2h-1zM353 588h1v5h-1zM357 588h1v7h-1zM361 588h1v10h-1zM385 588h1v3h-1zM389 588h1v5h-1zM393 588h1v8h-1zM397 588h1v10h-1zM401 588h1v11h-1zM405 588h1v12h-1zM409 588h1v15h-1zM413 588h1v18h-1zM417 588h1v20h-1zM421 588h1v20h-1zM437 588h1v20h-1zM441 588h1v22h-1zM445 588h1v26h-1zM449 588h1v26h-1zM477 588h1v8h-1zM525 568h1v20h-1zM529 571h1v17h-1zM533 573h1v15h-1zM537 574h1v14h-1zM569 567h1v21h-1zM577 567h1v21h-1zM581 570h1v18h-1zM585 573h1v15h-1zM589 576h1v12h-1zM593 579h1v9h-1zM597 579h1v9h-1zM617 564h1v24h-1zM621 567h1v21h-1zM625 569h1v19h-1zM629 570h1v18h-1zM633 570h1v18h-1zM649 562h1v26h-1zM657 567h1v21h-1zM661 572h1v16h-1zM665 578h1v10h-1zM669 582h1v6h-1zM673 586h1v2h-1zM677 588h1v2h-1zM681 588h1v5h-1zM685 588h1v8h-1zM689 588h1v15h-1zM693 588h1v19h-1zM697 588h1v22h-1zM701 588h1v26h-1zM705 588h1v26h-1zM717 588h1v25h-1zM721 588h1v26h-1zM753 588h1v10h-1zM757 588h1v14h-1zM761 588h1v20h-1zM765 588h1v27h-1zM769 588h1v35h-1zM773 588h1v44h-1zM777 588h1v46h-1zM785 588h1v46h-1zM789 588h1v45h-1zM849 588h1v2h-1zM853 588h1v2h-1zM857 588h1v2h-1zM861 588h1v2h-1z" fill="#FF0000"/></g></svg>

<!-- chart texts -->
<div class="t w ct" style="left:12px;top:114px">EURUSD,M5&nbsp; 1.3159 1.3161 1.3157 1.3157</div>
<div class="t w" style="left:10px;top:131px;font-size:10px;letter-spacing:0.75px">Profit totay with MA 50/200 is 86 Pips</div>
<div class="t w" style="left:309px;top:131px;font-size:10px;letter-spacing:0.6px">Profit yesterday is 0 Pips</div>
<div class="t w" style="left:509px;top:131px;font-size:10px;letter-spacing:0.6px">Long</div>
<div class="t w ct" style="left:14px;top:270px">#6485174 buy</div>
<div class="t w ct" style="left:14px;top:355px">#6489735 sell</div>
<div class="t w ct" style="left:13px;top:477px">Alex5757000 - MTF Moving Average 3 2147483647 2147483647 3 2147483647 2 2147483647 2</div>
<div class="t w ct" style="left:13px;top:563px">AO 0.00076</div>
<div class="t" style="left:930px;top:476px;letter-spacing:-0.2px;color:#00BFFF">M5 EMA (13)</div>
<div class="t" style="left:930px;top:493px;letter-spacing:-0.2px;color:#FF0000">M5 EMA (34)</div>
<div class="t" style="left:930px;top:509px;letter-spacing:-0.2px;color:#FF0000">M5 EMA (55)</div>
<div class="t" style="left:930px;top:525px;letter-spacing:-0.2px;color:#FF0000">M5 EMA (89)</div>
<svg class="a" style="left:878px;top:108px" width="14" height="8"><path d="M2 1h10l-5 6z" fill="#2F5F6F"/></svg>
<!-- price axis -->
<div class="pl" style="top:136px">1.3265</div>
<div class="pl" style="top:178px">1.3245</div>
<div class="pl" style="top:220px">1.3225</div>
<div class="pl" style="top:262px">1.3205</div>
<div class="pl" style="top:294px">1.3190</div>
<div class="pl" style="top:336px">1.3170</div>
<div class="pl" style="top:378px">1.3150</div>
<div class="pl" style="top:420px">1.3130</div>
<div class="pl" style="top:452px">1.3115</div>
<div class="a" style="left:1109px;top:363px;width:34px;height:11px;background:#fff"></div>
<div class="pl" style="top:363px;color:#000">1.3157</div>
<div class="pl" style="top:473px;left:1110px">4</div>
<div class="pl" style="top:544px;left:1110px">1</div>
<div class="pl" style="top:559px;left:1110px;transform:scaleX(0.83)">0.00342</div>
<div class="pl" style="top:583px;left:1110px;transform:scaleX(0.83)">0.00</div>
<div class="pl" style="top:628px;left:1109px;transform:scaleX(0.83)">-0.00579</div>
<svg class="a" style="left:0;top:0" width="1152" height="660" shape-rendering="crispEdges">
<path d="M1107 141.5h3M1107 183.5h3M1107 225.5h3M1107 267.5h3M1107 299.5h3M1107 341.5h3M1107 383.5h3M1107 425.5h3M1107 457.5h3M1107 472.5h3M1107 553.5h3M1107 558.5h3M1107 588.5h3M1107 638.5h3" stroke="#fff"/>
<path d="M9.5 640v3M73.5 640v3M137.5 640v3M201.5 640v3M265.5 640v3M329.5 640v3M393.5 640v3M457.5 640v3M521.5 640v3M585.5 640v3M649.5 640v3M713.5 640v3M777.5 640v3M841.5 640v3" stroke="#fff"/>
</svg>
<div class="tl" style="left:7px">28 Apr 2010</div>
<div class="tl" style="left:71px">28 Apr 03:00</div>
<div class="tl" style="left:135px">28 Apr 04:20</div>
<div class="tl" style="left:199px">28 Apr 05:40</div>
<div class="tl" style="left:263px">28 Apr 07:00</div>
<div class="tl" style="left:327px">28 Apr 08:20</div>
<div class="tl" style="left:391px">28 Apr 09:50</div>
<div class="tl" style="left:455px">28 Apr 11:10</div>
<div class="tl" style="left:519px">28 Apr 12:30</div>
<div class="tl" style="left:583px">28 Apr 13:50</div>
<div class="tl" style="left:647px">28 Apr 15:10</div>
<div class="tl" style="left:711px">28 Apr 16:30</div>
<div class="tl" style="left:775px">28 Apr 17:50</div>
<div class="tl" style="left:839px">28 Apr 19:10</div>

<!-- chart tabs -->
<div class="a" style="left:4px;top:659px;width:1144px;height:1px;background:#000"></div>
<div class="a" style="left:5px;top:660px;width:2px;height:18px;background:#ACA899"></div>
<div class="a" style="left:8px;top:659px;width:80px;height:20px;background:#fff;border:1px solid #000;border-top:none;border-bottom-width:2px;box-shadow:1px 0 0 #716F64"></div>
<div class="t" style="left:18px;top:664px;font-size:10px">EURUSD,M5</div>
<div class="t" style="left:99px;top:664px;font-size:10px;color:#808080">EURUSD,M30</div>
<div class="t" style="left:186px;top:664px;font-size:10px;color:#808080">EURUSD,H1</div>
<div class="t" style="left:267px;top:664px;font-size:10px;color:#808080">EURGBP,H1</div>
<div class="t" style="left:346px;top:664px;font-size:10px;color:#808080">EURGBP,M5</div>
<div class="t" style="left:425px;top:664px;font-size:10px;color:#808080">GOLD,M15</div>
<div class="t" style="left:498px;top:664px;font-size:10px;color:#808080">GOLD,Daily</div>
<svg class="a" style="left:0;top:659px" width="1152" height="22" shape-rendering="crispEdges">
<path d="M176.5 4v13M256.5 4v13M336.5 4v13M416.5 4v13M488.5 4v13M564.5 4v13" stroke="#808080"/>
<path d="M1124 6v8l-4-4z" fill="#A8A8A8"/><path d="M1137 6v8l4-4z" fill="#A8A8A8"/>
<rect x="4" y="20" width="1144" height="1" fill="#fff"/>
<rect x="4" y="21" width="1144" height="1" fill="#ACA899"/>
</svg>

<!-- terminal -->
<svg class="a" style="left:7px;top:685px" width="9" height="8"><path d="M1.5 1l5.5 6M7 1L1.5 7" stroke="#000" stroke-width="1.8"/></svg>
<div class="a" style="left:5px;top:697px;width:13px;height:109px;background:#0A55E0"></div>
<div class="t" style="left:6px;top:761px;width:12px;height:43px;color:#fff;writing-mode:vertical-rl;transform:rotate(180deg);font-size:11px;line-height:12px">Terminal</div>
<div class="a" style="left:19px;top:683px;width:1127px;height:102px;background:#fff;border-left:1px solid #7F9DB9;border-top:1px solid #ACA899"></div>
<!-- header -->
<div class="a" style="left:20px;top:684px;width:1108px;height:19px;background:linear-gradient(#F0EEE4,#ECE9D8 70%,#DEDACA)"></div>
<div class="a" style="left:20px;top:703px;width:1108px;height:2px;background:#D6D2C2"></div>
<svg class="a" style="left:0;top:683px" width="1152" height="102" shape-rendering="crispEdges">
<path d="M116.5 5v15M282.5 5v15M357.5 5v15M417.5 5v15M492.5 5v15M567.5 5v15M643.5 5v15M717.5 5v15M884.5 5v15M958.5 5v15M1034.5 5v15M1126.5 5v15" stroke="#C7C5B2"/>
<path d="M117.5 5v15M283.5 5v15M358.5 5v15M418.5 5v15M493.5 5v15M568.5 5v15M644.5 5v15M718.5 5v15M885.5 5v15M959.5 5v15M1035.5 5v15" stroke="#fff"/>
<path d="M85 10l4 7h-8z" fill="none" stroke="#C0C0C0"/>
<rect x="20" y="41" width="1108" height="20" fill="#EBEBEB"/>
<path d="M20 40.5h1108M20 60.5h1108M20 80.5h1108" stroke="#E0E0E0"/>
<path d="M116.5 22v59M282.5 22v59M357.5 22v59M417.5 22v59M492.5 22v59M567.5 22v59M643.5 22v59M717.5 22v59M884.5 22v59M958.5 22v59M1034.5 22v59" stroke="#E0E0E0"/>
<rect x="644" y="22" width="73" height="18" fill="#63EC63"/>
<rect x="644" y="42" width="73" height="18" fill="#63EC63"/>
<rect x="644" y="62" width="73" height="18" fill="#63EC63"/>
<rect x="20" y="81" width="1108" height="21" fill="#C6C6C6"/>
<!-- order icons -->
<g>
<path d="M23.5 24.5h7l3 3v9h-10z" fill="#fff" stroke="#707070"/><circle cx="33" cy="36" r="3" fill="#3A8AE8" stroke="#2060B0" shape-rendering="auto"/>
<path d="M23.5 44.5h7l3 3v9h-10z" fill="#fff" stroke="#707070"/><circle cx="33" cy="56" r="3" fill="#E05A20" stroke="#A03010" shape-rendering="auto"/>
<path d="M23.5 64.5h7l3 3v9h-10z" fill="#fff" stroke="#707070"/><circle cx="33" cy="76" r="3" fill="#3A8AE8" stroke="#2060B0" shape-rendering="auto"/>
</g>
<circle cx="30.5" cy="91.5" r="3.5" fill="#B8B8B8" stroke="#909090" shape-rendering="auto"/>
<!-- scrollbar -->
<rect x="1127" y="1" width="17" height="101" fill="#F3F1EA"/>
<rect x="1128.5" y="1.5" width="14" height="16" rx="2" fill="#C8DAF8" stroke="#A8C0E8"/>
<path d="M1132 11l3.5-3.5 3.5 3.5" stroke="#4D6185" stroke-width="2" fill="none" shape-rendering="auto"/>
<rect x="1128.5" y="78.5" width="14" height="5" rx="2" fill="#C8DAF8" stroke="#A8C0E8"/>
<rect x="1128.5" y="85.5" width="14" height="15" rx="2" fill="#C8DAF8" stroke="#A8C0E8"/>
<path d="M1132 91l3.5 3.5 3.5-3.5" stroke="#4D6185" stroke-width="2" fill="none" shape-rendering="auto"/>
<rect x="19" y="102" width="1126" height="1" fill="#000"/>
</svg>
<div class="t" style="left:32px;top:689px">Auftrag</div>
<div class="t" style="right:875px;top:689px">Zeit</div>
<div class="t" style="right:799px;top:689px">Typ</div>
<div class="t" style="right:739px;top:689px">Volumen</div>
<div class="t" style="right:664px;top:689px">Symbol</div>
<div class="t" style="right:589px;top:689px">Preis</div>
<div class="t" style="right:513px;top:689px">S / L</div>
<div class="t" style="right:439px;top:689px">T / P</div>
<div class="t" style="right:272px;top:689px">Zeit</div>
<div class="t" style="right:198px;top:689px">Preis</div>
<div class="t" style="right:122px;top:689px">Swap</div>
<div class="t" style="right:30px;top:689px">Gewinn</div>
<div class="t" style="left:44px;top:709px">6485034</div>
<div class="t" style="right:872px;top:709px;letter-spacing:0.2px">2010.04.28 17:21</div>
<div class="t" style="right:799px;top:709px">buy</div>
<div class="t" style="right:739px;top:709px">0.08</div>
<div class="t" style="right:664px;top:709px">eurusd</div>
<div class="t" style="right:589px;top:709px">1.3199</div>
<div class="t" style="right:513px;top:709px">0.0000</div>
<div class="t" style="right:439px;top:709px">1.3203</div>
<div class="t" style="right:272px;top:709px;letter-spacing:0.2px">2010.04.28 17:23</div>
<div class="t" style="right:198px;top:709px">1.3203</div>
<div class="t" style="right:122px;top:709px">0.00</div>
<div class="t" style="right:30px;top:709px">3.20</div>
<div class="t" style="left:44px;top:729px">6485087</div>
<div class="t" style="right:872px;top:729px;letter-spacing:0.2px">2010.04.28 17:23</div>
<div class="t" style="right:799px;top:729px">sell</div>
<div class="t" style="right:739px;top:729px">0.08</div>
<div class="t" style="right:664px;top:729px">eurusd</div>
<div class="t" style="right:589px;top:729px">1.3203</div>
<div class="t" style="right:513px;top:729px">0.0000</div>
<div class="t" style="right:439px;top:729px">1.3199</div>
<div class="t" style="right:272px;top:729px;letter-spacing:0.2px">2010.04.28 17:27</div>
<div class="t" style="right:198px;top:729px">1.3199</div>
<div class="t" style="right:122px;top:729px">0.00</div>
<div class="t" style="right:30px;top:729px">3.20</div>
<div class="t" style="left:44px;top:749px">6487377</div>
<div class="t" style="right:872px;top:749px;letter-spacing:0.2px">2010.04.28 18:00</div>
<div class="t" style="right:799px;top:749px">buy</div>
<div class="t" style="right:739px;top:749px">0.08</div>
<div class="t" style="right:664px;top:749px">eurusd</div>
<div class="t" style="right:589px;top:749px">1.3131</div>
<div class="t" style="right:513px;top:749px">0.0000</div>
<div class="t" style="right:439px;top:749px">1.3136</div>
<div class="t" style="right:272px;top:749px;letter-spacing:0.2px">2010.04.28 18:14</div>
<div class="t" style="right:198px;top:749px">1.3136</div>
<div class="t" style="right:122px;top:749px">0.00</div>
<div class="t" style="right:30px;top:749px">4.00</div>

<div class="t" style="left:44px;top:769px;font-weight:bold;letter-spacing:0.3px">Profit/Loss: 424.60&nbsp; Kredit: 0.00&nbsp; Einlage: 5 058.86&nbsp; Abbuchung: 0.00</div>
<div class="t" style="right:30px;top:769px;font-weight:bold;letter-spacing:0.6px">5 483.46</div>
<!-- bottom tabs -->
<div class="a" style="left:78px;top:784px;width:88px;height:20px;background:#fff;border:1px solid #000;border-top:none;border-bottom-width:2px;box-shadow:1px 0 0 #716F64"></div>
<div class="t" style="left:32px;top:790px;color:#808080">Trading</div>
<div class="t" style="left:88px;top:789px">Konto Historie</div>
<div class="t" style="left:174px;top:790px;color:#808080">Nachrichten</div>
<div class="t" style="left:251px;top:790px;color:#808080">Alarme</div>
<div class="t" style="left:304px;top:790px;color:#808080">Mailbox</div>
<div class="t" style="left:360px;top:790px;color:#808080">Experten</div>
<div class="t" style="left:425px;top:790px;color:#808080">Journal</div>
<svg class="a" style="left:0;top:784px" width="1152" height="50" shape-rendering="crispEdges">
<path d="M241.5 5v13M295.5 5v13M352.5 5v13M415.5 5v13M470.5 5v13" stroke="#808080"/>
<rect x="19" y="21" width="1126" height="1" fill="#fff"/>
<rect x="19" y="1" width="1" height="20" fill="#ACA899"/>
<rect x="4" y="24" width="1144" height="1" fill="#B8B4A4"/>
<rect x="4" y="25" width="1144" height="1" fill="#fff"/>
<path d="M427.5 29v16M536.5 29v16M637.5 29v16M709.5 29v16M780.5 29v16M849.5 29v16M920.5 29v16M986.5 29v16" stroke="#ACA899"/>
<path d="M428.5 29v16M537.5 29v16M638.5 29v16M710.5 29v16M781.5 29v16M850.5 29v16M921.5 29v16M987.5 29v16" stroke="#fff"/>
<path d="M992 31h2v9h-2zM995 31h2v8h-2zM998 31h2v7h-2zM1001 31h2v6h-2zM1004 31h2v5h-2zM1007 31h2v4h-2zM1010 31h2v3h-2zM1013 31h2v2h-2z" fill="#4A6800"/>
<path d="M992 41h2v2h-2zM995 40h2v3h-2zM998 39h2v4h-2zM1001 38h2v5h-2zM1004 37h2v6h-2zM1007 36h2v7h-2zM1010 35h2v8h-2zM1013 34h2v9h-2z" fill="#880000"/>
<path d="M1146 33l-13 13M1146 37l-9 9M1146 41l-5 5" stroke="#C5C2B2" stroke-width="1.5" shape-rendering="auto"/>
</svg>
<div class="t" style="left:5px;top:816px">Für Hilfe F1 drücken</div>
<div class="t" style="left:432px;top:816px;letter-spacing:-0.8px">EUR YEN Gold</div>
<div class="t" style="left:541px;top:816px;letter-spacing:0.2px">2010.04.28 11:30</div>
<div class="t" style="left:642px;top:816px">O: 1.3168</div>
<div class="t" style="left:714px;top:816px">H: 1.3168</div>
<div class="t" style="left:785px;top:816px">L: 1.3160</div>
<div class="t" style="left:854px;top:816px">C: 1.3161</div>
<div class="t" style="left:925px;top:816px">V: 94</div>
<div class="t" style="left:1033px;top:816px">64834/66 kb</div>

</body></html>
